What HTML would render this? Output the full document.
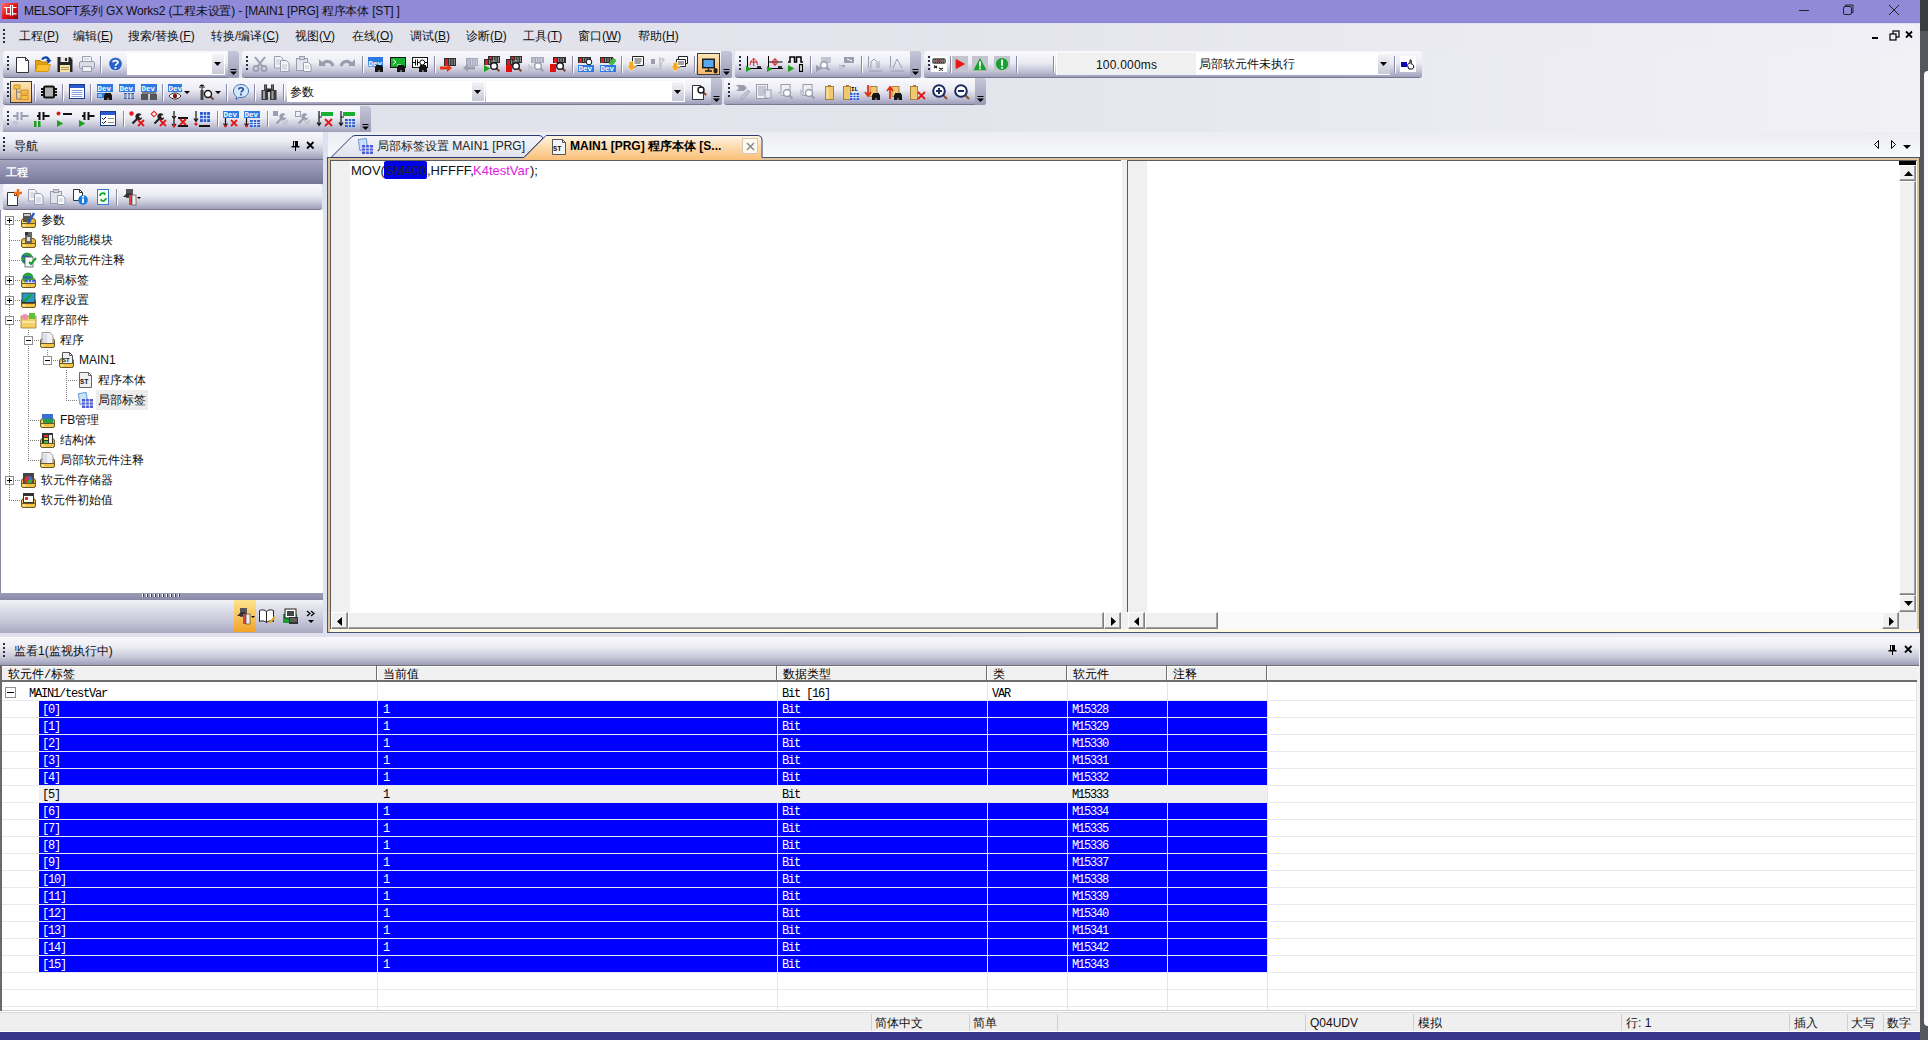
<!DOCTYPE html><html><head><meta charset="utf-8"><style>
*{margin:0;padding:0;box-sizing:border-box}
html,body{width:1928px;height:1040px;overflow:hidden;background:linear-gradient(90deg,#e0e0ea 0%,#e4e4ed 50%,#f1f1f6 100%);font-family:"Liberation Sans",sans-serif;font-size:12px;color:#000}
div{position:absolute}
.t{white-space:nowrap;line-height:14px}
.tb{border-radius:3px;background:linear-gradient(#f9f9fd 0%,#ececf4 45%,#c6c6d8 75%,#9e9ebc 100%);border-bottom:1px solid #78788e}
.ovf{background:linear-gradient(#c6c6d8,#9a9ab6);border-radius:0 3px 3px 0}
.grip{width:2px;background:repeating-linear-gradient(#2c2c44 0 2px,transparent 2px 4px)}
.sep{width:1px;background:#8a8aa4;border-right:1px solid #fff;width:2px}
.combo{background:#fff}
.ddb{background:linear-gradient(#f4f4f8,#c8c8d8)}
svg{position:absolute;overflow:visible}
.hd{background:linear-gradient(#f8f8fc 0%,#ececf4 35%,#c8c8da 72%,#9c9cb8 100%)}
.mono{font-family:Liberation Mono,monospace;font-size:11px}
</style></head><body>
<div style="left:0px;top:0px;width:1920px;height:23px;background:#8f8bd8"></div>
<div style="left:1920px;top:0px;width:8px;height:31px;background:#3b3c40"></div>
<div style="left:1920px;top:31px;width:8px;height:1009px;background:#56575c"></div>
<div style="left:1924px;top:71px;width:8px;height:955px;background:#fbfbfd;border-radius:5px"></div>
<svg style="left:2px;top:3px" width="16" height="16" viewBox="0 0 16 16"><defs><linearGradient id="rg" x1="0" y1="0" x2="1" y2="1"><stop offset="0" stop-color="#ff7070"/><stop offset=".5" stop-color="#e81010"/><stop offset="1" stop-color="#900010"/></linearGradient></defs><rect x="0" y="0" width="16" height="16" fill="url(#rg)"/><path d="M2 4.5h6.5M4.5 4.5v6.3h4M8.5 2v10.5M10.5 2v10.5M10.5 4.5h4M10.5 10.8h4" stroke="#fff" stroke-width="1.2" fill="none"/></svg>
<div class="t" style="left:24px;top:4px;font-size:12px;color:#111;letter-spacing:-0.2px">MELSOFT系列 GX Works2 (工程未设置) - [MAIN1 [PRG] 程序本体 [ST] ]</div>
<svg style="left:1798px;top:4px" width="110" height="14"><path d="M1 6.5h10" stroke="#222" stroke-width="1"/><rect x="45.5" y="2.5" width="8" height="8" rx="1.5" fill="none" stroke="#222"/><path d="M47.5 2.5v-1.5h7.5v7.5h-1.5" fill="none" stroke="#222"/><path d="M91 1l10 10M101 1l-10 10" stroke="#222" stroke-width="1"/></svg>
<div style="left:0px;top:23px;width:1920px;height:28px;background:linear-gradient(90deg,#e0e0ea 0%,#e4e4ed 50%,#f1f0f6 100%)"></div>
<div style="left:0px;top:22px;width:1920px;height:1px;background:#8a87c2"></div>
<div style="left:0px;top:23px;width:1920px;height:1px;background:#e3e1fa"></div>
<div class="grip" style="left:3px;top:29px;width:2px;height:16px;"></div>
<div class="t" style="left:19px;top:29px;color:#111">工程(<u>P</u>)</div>
<div class="t" style="left:73px;top:29px;color:#111">编辑(<u>E</u>)</div>
<div class="t" style="left:128px;top:29px;color:#111">搜索/替换(<u>F</u>)</div>
<div class="t" style="left:211px;top:29px;color:#111">转换/编译(<u>C</u>)</div>
<div class="t" style="left:295px;top:29px;color:#111">视图(<u>V</u>)</div>
<div class="t" style="left:352px;top:29px;color:#111">在线(<u>O</u>)</div>
<div class="t" style="left:410px;top:29px;color:#111">调试(<u>B</u>)</div>
<div class="t" style="left:466px;top:29px;color:#111">诊断(<u>D</u>)</div>
<div class="t" style="left:523px;top:29px;color:#111">工具(<u>T</u>)</div>
<div class="t" style="left:578px;top:29px;color:#111">窗口(<u>W</u>)</div>
<div class="t" style="left:638px;top:29px;color:#111">帮助(<u>H</u>)</div>
<svg style="left:1870px;top:30px" width="46" height="12"><rect x="2" y="7" width="6" height="2" fill="#000"/><rect x="23" y="1" width="6" height="6" fill="none" stroke="#000" stroke-width="1.2"/><rect x="20" y="4" width="6" height="6" fill="#eeeef4" stroke="#000" stroke-width="1.2"/><path d="M36 1.5l6 6M42 1.5l-6 6" stroke="#000" stroke-width="1.8"/></svg>
<div class="tb" style="left:3px;top:51px;width:236px;height:27px;"></div>
<div class="grip" style="left:7px;top:56px;width:2px;height:16px;"></div>
<div class="ovf" style="left:228px;top:51px;width:11px;height:27px;"></div>
<svg style="left:230px;top:68px" width="8" height="8"><path d="M0.5 1.5h6" stroke="#000"/><path d="M0 3.5h7l-3.5 3.5z" fill="#000"/></svg>
<div class="tb" style="left:242px;top:51px;width:490px;height:27px;"></div>
<div class="grip" style="left:246px;top:56px;width:2px;height:16px;"></div>
<div class="ovf" style="left:721px;top:51px;width:11px;height:27px;"></div>
<svg style="left:723px;top:68px" width="8" height="8"><path d="M0.5 1.5h6" stroke="#000"/><path d="M0 3.5h7l-3.5 3.5z" fill="#000"/></svg>
<div class="tb" style="left:735px;top:51px;width:186px;height:27px;"></div>
<div class="grip" style="left:739px;top:56px;width:2px;height:16px;"></div>
<div class="ovf" style="left:910px;top:51px;width:11px;height:27px;"></div>
<svg style="left:912px;top:68px" width="8" height="8"><path d="M0.5 1.5h6" stroke="#000"/><path d="M0 3.5h7l-3.5 3.5z" fill="#000"/></svg>
<div class="tb" style="left:924px;top:51px;width:498px;height:27px;"></div>
<div class="grip" style="left:928px;top:56px;width:2px;height:16px;"></div>
<div class="tb" style="left:3px;top:78px;width:719px;height:27px;"></div>
<div class="grip" style="left:7px;top:83px;width:2px;height:16px;"></div>
<div class="ovf" style="left:711px;top:78px;width:11px;height:27px;"></div>
<svg style="left:713px;top:95px" width="8" height="8"><path d="M0.5 1.5h6" stroke="#000"/><path d="M0 3.5h7l-3.5 3.5z" fill="#000"/></svg>
<div class="tb" style="left:724px;top:78px;width:262px;height:27px;"></div>
<div class="grip" style="left:728px;top:83px;width:2px;height:16px;"></div>
<div class="ovf" style="left:975px;top:78px;width:11px;height:27px;"></div>
<svg style="left:977px;top:95px" width="8" height="8"><path d="M0.5 1.5h6" stroke="#000"/><path d="M0 3.5h7l-3.5 3.5z" fill="#000"/></svg>
<div class="tb" style="left:3px;top:106px;width:368px;height:27px;"></div>
<div class="grip" style="left:7px;top:111px;width:2px;height:16px;"></div>
<div class="ovf" style="left:360px;top:106px;width:11px;height:27px;"></div>
<svg style="left:362px;top:123px" width="8" height="8"><path d="M0.5 1.5h6" stroke="#000"/><path d="M0 3.5h7l-3.5 3.5z" fill="#000"/></svg>
<svg style="left:14px;top:56px" width="16" height="16" viewBox="0 0 16 16"><path d="M2.5 1.5h9l3 3v12h-12z" fill="#fff" stroke="#333"/><path d="M11.5 1.5v3h3" fill="none" stroke="#333"/></svg>
<svg style="left:35px;top:56px" width="16" height="16" viewBox="0 0 16 16"><path d="M0.5 4.5h5l1 1.5h6v9h-12z" fill="#e0a010" stroke="#c08008"/><path d="M2.5 8.5h13l-2.5 7H0.5z" fill="#f8c030" stroke="#d89810"/><path d="M7 3.5c2-3 6-3 7 1" stroke="#1040a8" stroke-width="2.2" fill="none"/><path d="M11 4h5.5l-2.8 3.5z" fill="#1040a8"/></svg>
<svg style="left:57px;top:56px" width="16" height="16" viewBox="0 0 16 16"><rect x="0.5" y="1" width="15" height="15" fill="#262626"/><path d="M13 1l3 3v-3z" fill="#cfcfe0"/><rect x="3.5" y="1" width="8" height="5" fill="#e8e8e8"/><rect x="8" y="2" width="2" height="3" fill="#262626"/><rect x="3" y="9" width="10" height="7" fill="#f6e6a8"/><path d="M4 11.5h8M4 13.5h8" stroke="#b89858"/></svg>
<svg style="left:79px;top:56px" width="16" height="16" viewBox="0 0 16 16"><path d="M3.5 .5h8l1 1.5v4h-9z" fill="#f4f4f8" stroke="#9c9cb0"/><rect x=".5" y="5.5" width="15" height="7" rx="1.5" fill="#dcdce6" stroke="#9c9cb0"/><rect x="3.5" y="10.5" width="9" height="5" fill="#f0f0f4" stroke="#9c9cb0"/><path d="M5 3h5" stroke="#c4c4d2"/></svg>
<svg style="left:108px;top:56px" width="16" height="16" viewBox="0 0 16 16"><circle cx="7.5" cy="8" r="7.3" fill="#dde6f8"/><circle cx="7.5" cy="8" r="6.3" fill="#2a62c8"/><path d="M5 6.2c0-2.2 5-2.2 5 0 0 1.6-2.5 1.8-2.5 3.6" stroke="#fff" stroke-width="1.7" fill="none"/><rect x="6.6" y="11" width="1.8" height="1.8" fill="#fff"/></svg>
<div class="sep" style="left:100px;top:56px;width:2px;height:17px;"></div>
<div style="left:127px;top:53px;width:98px;height:22px;background:#fff"></div>
<div class="ddb" style="left:212px;top:54px;width:12px;height:20px;"></div>
<svg style="left:214px;top:62px" width="8" height="5"><path d="M0 0h7L3.5 4z" fill="#000"/></svg>
<svg style="left:252px;top:56px" width="16" height="16" viewBox="0 0 16 16"><circle cx="4" cy="12.5" r="2.6" fill="none" stroke="#9c9cb0" stroke-width="1.7"/><circle cx="12" cy="12.5" r="2.6" fill="none" stroke="#9c9cb0" stroke-width="1.7"/><path d="M3 1l7.5 9.5M13 1L5.5 10.5" stroke="#9c9cb0" stroke-width="2"/></svg>
<svg style="left:274px;top:56px" width="16" height="16" viewBox="0 0 16 16"><path d="M.5 .5h6l2.5 2.5v9h-8.5z" fill="#f4f4f8" stroke="#9c9cb0"/><path d="M6.5 4.5h6l2.5 2.5v8.5h-8.5z" fill="#f4f4f8" stroke="#9c9cb0"/><path d="M8 9h5M8 11h5M8 13h5M2 4h4M2 6h4M2 8h4" stroke="#c4c4d2"/></svg>
<svg style="left:296px;top:56px" width="16" height="16" viewBox="0 0 16 16"><rect x=".5" y="2.5" width="11" height="12" fill="#e4e4ec" stroke="#9c9cb0"/><rect x="3.5" y=".5" width="5" height="3" fill="#d4d4de" stroke="#9c9cb0"/><path d="M7.5 6.5h5l2.5 2.5v6.5h-7.5z" fill="#fafafc" stroke="#9c9cb0"/><path d="M9 10h4M9 12h4" stroke="#c4c4d2"/></svg>
<svg style="left:318px;top:56px" width="16" height="16" viewBox="0 0 16 16"><path d="M1 3v7h7z" fill="#9c9cb0"/><path d="M4.5 8.5c3-4.5 9-4 10.5 1.5" stroke="#9c9cb0" stroke-width="3.2" fill="none"/></svg>
<svg style="left:340px;top:56px" width="16" height="16" viewBox="0 0 16 16"><path d="M15 3v7H8z" fill="#9c9cb0"/><path d="M11.5 8.5c-3-4.5-9-4-10.5 1.5" stroke="#9c9cb0" stroke-width="3.2" fill="none"/></svg>
<svg style="left:368px;top:56px" width="16" height="16" viewBox="0 0 16 16"><rect x="0" y="1" width="15" height="10" fill="#2a7ae2"/><text x="0.5" y="9.5" font-size="7.5" fill="#fff" font-weight="bold" font-family="Liberation Mono">Dev</text><rect x="0" y="9" width="6" height="2" fill="#fff" opacity=".3"/><path d="M7 10.5h3.5V16H7zM11.5 10.5H15V16h-3.5z" fill="#151515"/><rect x="8" y="9" width="6" height="3" fill="#151515"/><rect x="10" y="12" width="2" height="2" fill="#151515"/></svg>
<svg style="left:390px;top:56px" width="16" height="16" viewBox="0 0 16 16"><rect x=".5" y="1.5" width="15" height="10" fill="#18b030" stroke="#151515"/><path d="M3 3.5l3 2.5-3 2.5M7 9h4" stroke="#fff" fill="none"/><path d="M7 10.5h3.5V16H7zM11.5 10.5H15V16h-3.5z" fill="#151515"/><rect x="8" y="9" width="6" height="3" fill="#151515"/><rect x="10" y="12" width="2" height="2" fill="#151515"/></svg>
<svg style="left:412px;top:56px" width="16" height="16" viewBox="0 0 16 16"><rect x=".5" y="1.5" width="15" height="10" fill="#fff" stroke="#151515"/><path d="M1 6.5h2.5M3.5 3.5v6M5.5 3.5v6M5.5 6.5h2M13 6.5h3" stroke="#000"/><circle cx="10.3" cy="6.5" r="2.5" fill="#fff" stroke="#000"/><path d="M7 10.5h3.5V16H7zM11.5 10.5H15V16h-3.5z" fill="#151515"/><rect x="8" y="9" width="6" height="3" fill="#151515"/><rect x="10" y="12" width="2" height="2" fill="#151515"/></svg>
<svg style="left:440px;top:56px" width="16" height="16" viewBox="0 0 16 16"><rect x="4" y="2" width="12" height="8" fill="#2c2c2c"/><rect x="5" y="3" width="3" height="7" fill="#d42020"/><rect x="9.0" y="3" width="1.2" height="6" fill="#8c8c8c"/><rect x="11.4" y="3" width="1.2" height="6" fill="#8c8c8c"/><rect x="13.8" y="3" width="1.2" height="6" fill="#8c8c8c"/><path d="M0 10.5h7v-2.5l5 4-5 4v-2.5H0z" fill="#e83412"/></svg>
<svg style="left:462px;top:56px" width="16" height="16" viewBox="0 0 16 16"><rect x="4" y="2" width="12" height="8" fill="#a8a8bc"/><rect x="5" y="3" width="3" height="7" fill="#b8b8c8"/><rect x="9.0" y="3" width="1.2" height="6" fill="#d0d0dc"/><rect x="11.4" y="3" width="1.2" height="6" fill="#d0d0dc"/><rect x="13.8" y="3" width="1.2" height="6" fill="#d0d0dc"/><path d="M16 10.5H9v-2.5l-5 4 5 4v-2.5h7z" fill="#9c9cb0" transform="translate(-3,0)"/></svg>
<svg style="left:484px;top:56px" width="16" height="16" viewBox="0 0 16 16"><rect x="4" y="0" width="12" height="7" fill="#2c2c2c"/><rect x="5" y="1" width="3" height="6" fill="#d42020"/><rect x="9.0" y="1" width="1.2" height="5" fill="#8c8c8c"/><rect x="11.4" y="1" width="1.2" height="5" fill="#8c8c8c"/><rect x="13.8" y="1" width="1.2" height="5" fill="#8c8c8c"/><rect x="0" y="3" width="8" height="6" fill="#2c2c2c"/><rect x="1" y="4" width="3" height="5" fill="#d42020"/><rect x="5.0" y="4" width="1.2" height="4" fill="#8c8c8c"/><rect x="7.4" y="4" width="1.2" height="4" fill="#8c8c8c"/><rect x="9.8" y="4" width="1.2" height="4" fill="#8c8c8c"/><path d="M0 9v7l6.3 -3.5z" fill="#20a020"/><path d="M12.309999999999999 12.309999999999999l3 3" stroke="#804020" stroke-width="2"/><circle cx="10" cy="10" r="3.3" fill="#fff" stroke="#151515" stroke-width="1.4"/></svg>
<svg style="left:506px;top:56px" width="16" height="16" viewBox="0 0 16 16"><rect x="4" y="0" width="12" height="7" fill="#2c2c2c"/><rect x="5" y="1" width="3" height="6" fill="#d42020"/><rect x="9.0" y="1" width="1.2" height="5" fill="#8c8c8c"/><rect x="11.4" y="1" width="1.2" height="5" fill="#8c8c8c"/><rect x="13.8" y="1" width="1.2" height="5" fill="#8c8c8c"/><rect x="0" y="3" width="8" height="6" fill="#2c2c2c"/><rect x="1" y="4" width="3" height="5" fill="#d42020"/><rect x="5.0" y="4" width="1.2" height="4" fill="#8c8c8c"/><rect x="7.4" y="4" width="1.2" height="4" fill="#8c8c8c"/><rect x="9.8" y="4" width="1.2" height="4" fill="#8c8c8c"/><rect x="0" y="9" width="6" height="7" fill="#e01010"/><path d="M12.309999999999999 12.309999999999999l3 3" stroke="#804020" stroke-width="2"/><circle cx="10" cy="10" r="3.3" fill="#fff" stroke="#151515" stroke-width="1.4"/></svg>
<svg style="left:528px;top:56px" width="16" height="16" viewBox="0 0 16 16"><rect x="3" y="1" width="13" height="6" fill="#a8a8bc"/><rect x="4" y="2" width="3" height="5" fill="#b8b8c8"/><rect x="8.0" y="2" width="1.2" height="4" fill="#d0d0dc"/><rect x="10.4" y="2" width="1.2" height="4" fill="#d0d0dc"/><rect x="12.8" y="2" width="1.2" height="4" fill="#d0d0dc"/><path d="M0 8v8l6-4z" fill="#c4c4d2"/><path d="M12.309999999999999 12.309999999999999l3 3" stroke="#9c9cb0" stroke-width="2"/><circle cx="10" cy="10" r="3.3" fill="#fff" stroke="#9c9cb0" stroke-width="1.4"/></svg>
<svg style="left:550px;top:56px" width="16" height="16" viewBox="0 0 16 16"><rect x="3" y="1" width="13" height="6" fill="#2c2c2c"/><rect x="4" y="2" width="3" height="5" fill="#d42020"/><rect x="8.0" y="2" width="1.2" height="4" fill="#8c8c8c"/><rect x="10.4" y="2" width="1.2" height="4" fill="#8c8c8c"/><rect x="12.8" y="2" width="1.2" height="4" fill="#8c8c8c"/><rect x="0" y="8" width="6" height="8" fill="#e01010"/><path d="M12.309999999999999 12.309999999999999l3 3" stroke="#804020" stroke-width="2"/><circle cx="10" cy="10" r="3.3" fill="#fff" stroke="#151515" stroke-width="1.4"/></svg>
<svg style="left:578px;top:56px" width="16" height="16" viewBox="0 0 16 16"><rect x="0" y="1" width="13" height="6" fill="#2c2c2c"/><rect x="1" y="2" width="3" height="5" fill="#d42020"/><rect x="5.0" y="2" width="1.2" height="4" fill="#8c8c8c"/><rect x="7.4" y="2" width="1.2" height="4" fill="#8c8c8c"/><rect x="9.8" y="2" width="1.2" height="4" fill="#8c8c8c"/><circle cx="11" cy="6" r="2.8" fill="#fff" stroke="#151515"/><rect x="0" y="9" width="16" height="7" fill="#2a7ae2"/><text x="0.5" y="14.5" font-size="7.5" fill="#fff" font-weight="bold" font-family="Liberation Mono">Dev</text></svg>
<svg style="left:600px;top:56px" width="16" height="16" viewBox="0 0 16 16"><rect x="0" y="1" width="13" height="6" fill="#2c2c2c"/><rect x="1" y="2" width="3" height="5" fill="#d42020"/><rect x="5.0" y="2" width="1.2" height="4" fill="#8c8c8c"/><rect x="7.4" y="2" width="1.2" height="4" fill="#8c8c8c"/><rect x="9.8" y="2" width="1.2" height="4" fill="#8c8c8c"/><path d="M9 7l4-5 3 2.5-4 5z" fill="#40c040" stroke="#208020" stroke-width=".6"/><rect x="0" y="9" width="16" height="7" fill="#2a7ae2"/><text x="0.5" y="14.5" font-size="7.5" fill="#fff" font-weight="bold" font-family="Liberation Mono">Dev</text></svg>
<svg style="left:628px;top:56px" width="16" height="16" viewBox="0 0 16 16"><path d="M4.5 .5h11v9h-6.5l-3 2.5v-2.5h-1.5z" fill="#fff" stroke="#222"/><path d="M6.5 3h7M6.5 5h7M6.5 7h6" stroke="#444"/><path d="M1 5.5h4.5v4h2.5l-4.5 6-4.5-6h2z" fill="#f6a820" stroke="#fff" stroke-width=".5"/></svg>
<svg style="left:650px;top:56px" width="16" height="16" viewBox="0 0 16 16"><rect x="1" y="3" width="4" height="5" fill="#9c9cb0"/><path d="M9 .5l3 3-3 3zM12 1l3 3-3 3z" fill="#c4c4d2"/><rect x="9" y="6" width="3" height="6" fill="#c4c4d2"/><path d="M0 12h9v-2l4 3-4 3v-2H0z" fill="#c4c4d2"/></svg>
<svg style="left:672px;top:56px" width="16" height="16" viewBox="0 0 16 16"><path d="M6.5 .5h9v7h-9z" fill="#fff" stroke="#222"/><path d="M4.5 3.5h9v7h-5l-3 2v-2h-1z" fill="#fff" stroke="#222"/><path d="M6 6h6M6 8h6" stroke="#444"/><path d="M1 6.5h4.5v3.5h2.5l-4.5 6-4.5-6h2z" fill="#f6a820" stroke="#fff" stroke-width=".5"/></svg>
<div class="sep" style="left:362px;top:56px;width:2px;height:17px;"></div>
<div class="sep" style="left:434px;top:56px;width:2px;height:17px;"></div>
<div class="sep" style="left:572px;top:56px;width:2px;height:17px;"></div>
<div class="sep" style="left:621px;top:56px;width:2px;height:17px;"></div>
<div class="sep" style="left:694px;top:56px;width:2px;height:17px;"></div>
<div style="left:697px;top:53px;width:23px;height:22px;background:linear-gradient(#fde4b8,#f8b868);border:1px solid #3c3c3c"></div>
<svg style="left:701px;top:57px" width="16" height="16" viewBox="0 0 16 16"><rect x="1" y="1.5" width="13" height="10" fill="#1e1e1e"/><rect x="2.5" y="3" width="10" height="7" fill="#58a8f0"/><path d="M4 14h7" stroke="#1e1e1e" stroke-width="1.6"/><path d="M7.5 11.5v2" stroke="#1e1e1e" stroke-width="1.6"/><rect x="12.5" y="11" width="4" height="5.5" rx="2" fill="#222"/></svg>
<svg style="left:746px;top:56px" width="16" height="16" viewBox="0 0 16 16"><path d="M1.5 0v13M1 12.5h15" stroke="#000"/><path d="M4 9c1.5-8 6-8 7.5 0" stroke="#d42020" fill="none"/><path d="M7.7 2v8M4 6h7.5" stroke="#d42020"/><path d="M0 10v6l5.4 -3.0z" fill="#20a020"/><rect x="11" y="10" width="4" height="2" fill="#333"/></svg>
<svg style="left:767px;top:56px" width="16" height="16" viewBox="0 0 16 16"><path d="M1.5 0v13M1 12.5h15M1.5 6h14" stroke="#000"/><circle cx="8" cy="6" r="2.5" fill="none" stroke="#d42020"/><path d="M8 2v8" stroke="#d42020"/><path d="M0 10v6l5.4 -3.0z" fill="#20a020"/><rect x="11" y="10" width="4" height="2" fill="#333"/></svg>
<svg style="left:788px;top:56px" width="16" height="16" viewBox="0 0 16 16"><path d="M0 6h2V1h4.5v5h2V1h4.5v5h2" stroke="#000" fill="none" stroke-width="1.5"/><path d="M0 9v7l6.3 -3.5z" fill="#20a020"/><rect x="11" y="8" width="4" height="8" fill="#000"/><rect x="12.2" y="9.2" width="1.6" height="5.6" fill="#fff"/></svg>
<svg style="left:816px;top:56px" width="16" height="16" viewBox="0 0 16 16"><rect x="5" y="1" width="10" height="6" fill="#c4c4d2"/><path d="M0 9v7l6.3 -3.5z" fill="#9c9cb0"/><path d="M10.309999999999999 11.309999999999999l3 3" stroke="#9c9cb0" stroke-width="2"/><circle cx="8" cy="9" r="3.3" fill="#fff" stroke="#9c9cb0" stroke-width="1.4"/></svg>
<svg style="left:839px;top:56px" width="16" height="16" viewBox="0 0 16 16"><rect x="5" y="1" width="10" height="6" fill="#9c9cb0"/><path d="M8 3l5 2" stroke="#fff"/><path d="M0 10h6" stroke="#9c9cb0" stroke-width="2"/><path d="M0 8v7l6.3 -3.5z" fill="#c4c4d2"/></svg>
<svg style="left:867px;top:56px" width="16" height="16" viewBox="0 0 16 16"><path d="M1.5 0v15h14" stroke="#9c9cb0" fill="none"/><path d="M4 12V6l3-3 3 3v6M12 12V5" stroke="#9c9cb0" fill="none"/><path d="M0 10v6l5.4 -3.0z" fill="#c4c4d2"/></svg>
<svg style="left:889px;top:56px" width="16" height="16" viewBox="0 0 16 16"><path d="M1.5 0v15h14" stroke="#9c9cb0" fill="none"/><path d="M4 12l4-9 5 9" stroke="#9c9cb0" fill="none"/><path d="M0 10v6l5.4 -3.0z" fill="#c4c4d2"/></svg>
<div class="sep" style="left:810px;top:56px;width:2px;height:17px;"></div>
<div class="sep" style="left:861px;top:56px;width:2px;height:17px;"></div>
<svg style="left:931px;top:56px" width="16" height="16" viewBox="0 0 16 16"><rect x="0" y="0" width="16" height="16" fill="#fff"/><rect x="1" y="2" width="14" height="6" rx="2.5" fill="#707070"/><path d="M2 3.5h12M2 6.5h12" stroke="#333" stroke-dasharray="1 1"/><path d="M6.5 3.5l3.5 1.5-3.5 1.5z" fill="#d42020"/><path d="M3 9.5l3 2.5M6 10l-3 2M8 12l4 2.5M12 12l-4 2.5" stroke="#222" stroke-width="1.3"/></svg>
<div class="sep" style="left:950px;top:56px;width:2px;height:17px;"></div>
<div style="left:952px;top:56px;width:16px;height:16px;background:#c4c4cc"></div>
<svg style="left:953px;top:57px" width="16" height="16" viewBox="0 0 16 16"><g transform="scale(.875)"><path d="M3 2v12l11-6z" fill="#e81818"/></g></svg>
<div style="left:972px;top:56px;width:16px;height:16px;background:#c4c4cc"></div>
<svg style="left:973px;top:57px" width="16" height="16" viewBox="0 0 16 16"><g transform="scale(.875)"><path d="M8 1L.5 15h15z" fill="#18a030"/><rect x="7" y="5" width="2" height="6" fill="#fff"/><rect x="7" y="12" width="2" height="2" fill="#fff"/></g></svg>
<div style="left:994px;top:56px;width:16px;height:16px;background:#c4c4cc"></div>
<svg style="left:995px;top:57px" width="16" height="16" viewBox="0 0 16 16"><g transform="scale(.875)"><circle cx="8" cy="8" r="7" fill="#18a030"/><rect x="7" y="3" width="2.2" height="7" fill="#fff"/><rect x="7" y="11.3" width="2.2" height="2" fill="#fff"/></g></svg>
<div class="sep" style="left:1016px;top:56px;width:2px;height:17px;"></div>
<div class="sep" style="left:1053px;top:56px;width:2px;height:17px;"></div>
<div style="left:1056px;top:53px;width:140px;height:22px;background:#f0f0f0;border-left:1px solid #fff"></div>
<div class="t" style="left:1096px;top:58px;color:#111;font-size:12px;letter-spacing:0.2px">100.000ms</div>
<div style="left:1196px;top:53px;width:194px;height:22px;background:#fff"></div>
<div class="t" style="left:1199px;top:57px;color:#111">局部软元件未执行</div>
<div class="ddb" style="left:1378px;top:54px;width:12px;height:20px;"></div>
<svg style="left:1380px;top:62px" width="8" height="5"><path d="M0 0h7L3.5 4z" fill="#000"/></svg>
<div class="sep" style="left:1394px;top:56px;width:2px;height:17px;"></div>
<svg style="left:1400px;top:56px" width="16" height="16" viewBox="0 0 16 16"><rect x="0" y="0" width="16" height="16" fill="#fff"/><rect x="1" y="6" width="6" height="5" fill="#0a0ab0"/><path d="M8 11c-1-2 0-4 2-4V4.5c0-1 1.2-1 1.2 0V8c2 0 2.5 1.5 2.5 3s-1 2-2.5 2H9z" fill="#fff" stroke="#000" stroke-width="1"/></svg>
<div style="left:10px;top:81px;width:22px;height:22px;background:linear-gradient(#fde4b8,#f8b868);border:1px solid #3c3c3c"></div>
<svg style="left:13px;top:84px" width="16" height="16" viewBox="0 0 16 16"><rect x="1" y="1" width="6" height="4" fill="#f6c040" stroke="#c08820" stroke-width=".8"/><rect x="8" y="6" width="7" height="4" fill="#f6c040" stroke="#c08820" stroke-width=".8"/><rect x="8" y="11.5" width="7" height="4" fill="#f6c040" stroke="#c08820" stroke-width=".8"/><path d="M3.5 5v10h4.5M3.5 8h4.5" stroke="#808080" fill="none"/></svg>
<svg style="left:41px;top:84px" width="16" height="16" viewBox="0 0 16 16"><rect x="3" y="2.5" width="10" height="11" rx="1.5" fill="#b0b0b0" stroke="#111" stroke-width="2"/><path d="M0 5h3M0 8h3M0 11h3M13 5h3M13 8h3M13 11h3" stroke="#111" stroke-width="1.8"/></svg>
<svg style="left:69px;top:84px" width="16" height="16" viewBox="0 0 16 16"><rect x=".5" y=".5" width="15" height="14" fill="#fff" stroke="#1a3a8a"/><rect x="1" y="1" width="14" height="3" fill="#2a5ad0"/><path d="M2.5 6.5h11M2.5 8.5h11M2.5 10.5h11M2.5 12.5h11" stroke="#6a8ad8" stroke-width=".8"/></svg>
<svg style="left:97px;top:84px" width="16" height="16" viewBox="0 0 16 16"><rect x="0" y="0" width="16" height="8" fill="#2a7ae2"/><text x="0.5" y="6.5" font-size="7.5" fill="#fff" font-weight="bold" font-family="Liberation Mono">Dev</text><rect x="0" y="9" width="8" height="5" fill="#2a7ae2"/><rect x="1" y="10" width="4" height="3" fill="#fff" opacity=".5"/><path d="M7 10.5h3.5V16H7zM11.5 10.5H15V16h-3.5z" fill="#151515"/><rect x="8" y="9" width="6" height="3" fill="#151515"/><rect x="10" y="12" width="2" height="2" fill="#151515"/></svg>
<svg style="left:119px;top:84px" width="16" height="16" viewBox="0 0 16 16"><rect x="0" y="0" width="16" height="8" fill="#2a7ae2"/><text x="0.5" y="6.5" font-size="7.5" fill="#fff" font-weight="bold" font-family="Liberation Mono">Dev</text><rect x="5" y="9" width="10" height="6" fill="#3a5aa0"/><path d="M5 11.0h10" stroke="#fff" stroke-width=".8"/><path d="M5 13.0h10" stroke="#fff" stroke-width=".8"/><path d="M8.333333333333334 9v6" stroke="#fff" stroke-width=".8"/><path d="M11.666666666666668 9v6" stroke="#fff" stroke-width=".8"/></svg>
<svg style="left:141px;top:84px" width="16" height="16" viewBox="0 0 16 16"><rect x="0" y="0" width="16" height="8" fill="#2a7ae2"/><text x="0.5" y="6.5" font-size="7.5" fill="#fff" font-weight="bold" font-family="Liberation Mono">Dev</text><path d="M1 9h14" stroke="#222"/><rect x="0" y="10" width="7" height="6" fill="#555"/><rect x="9" y="10" width="7" height="6" fill="#555"/></svg>
<svg style="left:168px;top:84px" width="16" height="16" viewBox="0 0 16 16"><rect x="0" y="0" width="14" height="8" fill="#2a7ae2"/><text x="0.5" y="6.5" font-size="7.5" fill="#fff" font-weight="bold" font-family="Liberation Mono">Dev</text><path d="M1 12c3-4 9-4 12 0-3 4-9 4-12 0z" fill="#fff" stroke="#333"/><circle cx="7" cy="12" r="2.2" fill="#8a1010"/></svg>
<svg style="left:198px;top:84px" width="16" height="16" viewBox="0 0 16 16"><path d="M4 0v6M1 3h6M2 1.5h4" stroke="#222"/><rect x="2.5" y="6" width="3" height="10" fill="#444"/><path d="M12.45 12.45l3 3" stroke="#804020" stroke-width="2"/><circle cx="10" cy="10" r="3.5" fill="#fff" stroke="#151515" stroke-width="1.4"/></svg>
<svg style="left:233px;top:84px" width="16" height="16" viewBox="0 0 16 16"><path d="M8 .5c4.5 0 7.5 3 7.5 6.5S12.5 13.5 8 13.5c-.8 0-1.5 0-2.2-.2L3 15.5l.5-3C1.5 11.5.5 9 .5 7 .5 3.5 3.5.5 8 .5z" fill="#d4e8fc" stroke="#3a6ab8"/><path d="M5.7 5.4c0-2.2 4.6-2.2 4.6 0 0 1.4-2.3 1.6-2.3 3.2" stroke="#2a4a98" stroke-width="1.6" fill="none"/><rect x="7.1" y="9.6" width="1.8" height="1.8" fill="#2a4a98"/></svg>
<svg style="left:261px;top:84px" width="16" height="16" viewBox="0 0 16 16"><rect x="3" y="0.5" width="3" height="6" fill="#333"/><rect x="10" y="0.5" width="3" height="6" fill="#333"/><rect x="0.5" y="6" width="6.5" height="10" fill="#3a3a3a"/><rect x="9" y="6" width="6.5" height="10" fill="#3a3a3a"/><rect x="2" y="7" width="2" height="8" fill="#a0a0a0"/><rect x="10.5" y="7" width="2" height="8" fill="#a0a0a0"/><rect x="6" y="4.5" width="4" height="3.5" fill="#222"/><rect x="3.8" y="1.5" width="1" height="4" fill="#888"/><rect x="10.8" y="1.5" width="1" height="4" fill="#888"/></svg>
<svg style="left:184px;top:91px" width="40" height="5"><path d="M0 0h6L3 3z M31 0h6l-3 3z" fill="#000"/></svg>
<div class="sep" style="left:34px;top:84px;width:2px;height:17px;"></div>
<div class="sep" style="left:62px;top:84px;width:2px;height:17px;"></div>
<div class="sep" style="left:90px;top:84px;width:2px;height:17px;"></div>
<div class="sep" style="left:162px;top:84px;width:2px;height:17px;"></div>
<div class="sep" style="left:226px;top:84px;width:2px;height:17px;"></div>
<div class="sep" style="left:254px;top:84px;width:2px;height:17px;"></div>
<div class="sep" style="left:283px;top:84px;width:2px;height:17px;"></div>
<div style="left:287px;top:81px;width:198px;height:21px;background:#fff"></div>
<div class="t" style="left:290px;top:85px;color:#111">参数</div>
<div class="ddb" style="left:472px;top:82px;width:12px;height:19px;"></div>
<svg style="left:474px;top:90px" width="8" height="5"><path d="M0 0h7L3.5 4z" fill="#000"/></svg>
<div style="left:486px;top:81px;width:199px;height:21px;background:#fff"></div>
<div class="ddb" style="left:672px;top:82px;width:12px;height:19px;"></div>
<svg style="left:674px;top:90px" width="8" height="5"><path d="M0 0h7L3.5 4z" fill="#000"/></svg>
<svg style="left:691px;top:84px" width="16" height="16" viewBox="0 0 16 16"><path d="M1.5 1.5h8l3 3v11h-11z" fill="#fff" stroke="#333"/><path d="M9.5 1.5v3h3" fill="none" stroke="#333"/><path d="M12.1 8.1l3 3" stroke="#804020" stroke-width="2"/><circle cx="10" cy="6" r="3" fill="#fff" stroke="#151515" stroke-width="1.4"/></svg>
<svg style="left:735px;top:84px" width="16" height="16" viewBox="0 0 16 16"><path d="M1 1h8l3 3-3 3H1l3-3z" fill="#9c9cb0"/><path d="M6 13l7-7 2 2-7 7H6z" fill="#c4c4d2" stroke="#9c9cb0" stroke-width=".7"/></svg>
<svg style="left:756px;top:84px" width="16" height="16" viewBox="0 0 16 16"><rect x=".5" y=".5" width="11" height="14" fill="#f0f0f4" stroke="#9c9cb0"/><path d="M2 3h8M2 5h8M2 7h8M2 9h8M2 11h6" stroke="#9c9cb0"/><rect x="9" y="6" width="6" height="8" fill="#e8e8f0" stroke="#9c9cb0"/></svg>
<svg style="left:778px;top:84px" width="16" height="16" viewBox="0 0 16 16"><rect x="3" y=".5" width="9" height="11" fill="#f0f0f4" stroke="#9c9cb0"/><path d="M0 9l4-4v8z" fill="#c4c4d2"/><path d="M11.45 11.45l3 3" stroke="#9c9cb0" stroke-width="2"/><circle cx="9" cy="9" r="3.5" fill="#fff" stroke="#9c9cb0" stroke-width="1.4"/></svg>
<svg style="left:800px;top:84px" width="16" height="16" viewBox="0 0 16 16"><rect x="3" y=".5" width="9" height="11" fill="#f0f0f4" stroke="#9c9cb0"/><path d="M0 5l4 4-4 4z" fill="#c4c4d2"/><path d="M11.45 11.45l3 3" stroke="#9c9cb0" stroke-width="2"/><circle cx="9" cy="9" r="3.5" fill="#fff" stroke="#9c9cb0" stroke-width="1.4"/></svg>
<svg style="left:825px;top:84px" width="16" height="16" viewBox="0 0 16 16"><rect x="3" y="1" width="3" height="2" fill="#a08040"/><rect x=".5" y="2.5" width="8" height="13" fill="#f0c870" stroke="#a88040"/><rect x="1.5" y="3.5" width="2" height="11" fill="#f8e0a0"/></svg>
<svg style="left:843px;top:84px" width="16" height="16" viewBox="0 0 16 16"><rect x="3" y="1" width="3" height="2" fill="#a08040"/><rect x=".5" y="2.5" width="7" height="13" fill="#f0c870" stroke="#a88040"/><text x="8" y="7" font-size="6" fill="#000" font-weight="bold" font-family="Liberation Mono">IL</text><rect x="7" y="9" width="9" height="7" fill="#2a5ad0"/><path d="M7 11.333333333333334h9" stroke="#fff" stroke-width=".8"/><path d="M7 13.666666666666668h9" stroke="#fff" stroke-width=".8"/><path d="M10.0 9v7" stroke="#fff" stroke-width=".8"/><path d="M13.0 9v7" stroke="#fff" stroke-width=".8"/></svg>
<svg style="left:865px;top:84px" width="16" height="16" viewBox="0 0 16 16"><rect x="5" y="2.5" width="7" height="10" fill="#f0c870" stroke="#a88040"/><path d="M3 1v10M0 8l3 4 3-4" stroke="#e03010" stroke-width="1.8" fill="none"/><path d="M7 10.5h3.5V16H7zM11.5 10.5H15V16h-3.5z" fill="#151515"/><rect x="8" y="9" width="6" height="3" fill="#151515"/><rect x="10" y="12" width="2" height="2" fill="#151515"/></svg>
<svg style="left:887px;top:84px" width="16" height="16" viewBox="0 0 16 16"><rect x="5" y="2.5" width="7" height="10" fill="#f0c870" stroke="#a88040"/><path d="M3 15V4M0 7l3-4 3 4" stroke="#e03010" stroke-width="1.8" fill="none"/><path d="M7 10.5h3.5V16H7zM11.5 10.5H15V16h-3.5z" fill="#151515"/><rect x="8" y="9" width="6" height="3" fill="#151515"/><rect x="10" y="12" width="2" height="2" fill="#151515"/></svg>
<svg style="left:910px;top:84px" width="16" height="16" viewBox="0 0 16 16"><rect x="3" y="1" width="3" height="2" fill="#a08040"/><rect x=".5" y="2.5" width="7" height="13" fill="#f0c870" stroke="#a88040"/><path d="M8 8l7 7M15 8l-7 7" stroke="#e01818" stroke-width="1.8"/></svg>
<svg style="left:932px;top:84px" width="16" height="16" viewBox="0 0 16 16"><path d="M11 11l4 4" stroke="#8a5030" stroke-width="2.2"/><circle cx="7" cy="7" r="5.8" fill="#fff" stroke="#1a2a60" stroke-width="2"/><path d="M4 7h6M7 4v6" stroke="#1a2a60" stroke-width="2"/></svg>
<svg style="left:954px;top:84px" width="16" height="16" viewBox="0 0 16 16"><path d="M11 11l4 4" stroke="#8a5030" stroke-width="2.2"/><circle cx="7" cy="7" r="5.8" fill="#fff" stroke="#1a2a60" stroke-width="2"/><path d="M4 7h6" stroke="#1a2a60" stroke-width="2"/></svg>
<svg style="left:13px;top:111px" width="16" height="16" viewBox="0 0 16 16"><path d="M0 5h5M4.5 1v8M8.5 1v8M8.5 5h7" stroke="#9c9cb0" stroke-width="2"/><rect x="0" y="10" width="5" height="5" fill="#c4c4d2"/></svg>
<svg style="left:34px;top:111px" width="16" height="16" viewBox="0 0 16 16"><path d="M3 5h3M5.5 1v8M9.5 1v8M9.5 5h6" stroke="#111" stroke-width="2"/><rect x="0" y="10" width="2.5" height="6" fill="#20a020"/><rect x="4" y="10" width="2.5" height="6" fill="#20a020"/></svg>
<svg style="left:56px;top:111px" width="16" height="16" viewBox="0 0 16 16"><circle cx="2.5" cy="2.5" r="2" fill="#e01818"/><path d="M7 3h9" stroke="#111" stroke-width="2"/><path d="M1 9v7l6.3 -3.5z" fill="#20a020"/></svg>
<svg style="left:79px;top:111px" width="16" height="16" viewBox="0 0 16 16"><path d="M3 5h3M5.5 1v8M9.5 1v8M9.5 5h6" stroke="#111" stroke-width="2"/><path d="M0 9v7l6.3 -3.5z" fill="#20a020"/></svg>
<svg style="left:100px;top:111px" width="16" height="16" viewBox="0 0 16 16"><rect x=".5" y=".5" width="15" height="14" fill="#fff" stroke="#1a3a8a"/><rect x="1" y="1" width="14" height="3" fill="#2a5ad0"/><path d="M2 7l1.5 1.5L6 6M2 11l1.5 1.5L6 10" stroke="#222" fill="none"/><path d="M8 7.5h6M8 11.5h6" stroke="#888"/></svg>
<svg style="left:129px;top:111px" width="16" height="16" viewBox="0 0 16 16"><circle cx="2.5" cy="2.5" r="2.2" fill="#e01818"/><path d="M3.5 12.5L9 7" stroke="#222" stroke-width="2.2"/><path d="M8 8.5a3.3 3.3 0 1 1 4.5-4.5l-2 .5-.5 1.5 1.5 1 1.8-.8a3.3 3.3 0 0 1-5.3 2.3z" fill="#222"/><path d="M9 9l6 6M15 9l-6 6" stroke="#e01818" stroke-width="1.8"/></svg>
<svg style="left:151px;top:111px" width="16" height="16" viewBox="0 0 16 16"><rect x="1" y="1" width="4" height="4" transform="rotate(45 3 3)" fill="#fff" stroke="#e01818"/><path d="M3.5 12.5L9 7" stroke="#222" stroke-width="2.2"/><path d="M8 8.5a3.3 3.3 0 1 1 4.5-4.5l-2 .5-.5 1.5 1.5 1 1.8-.8a3.3 3.3 0 0 1-5.3 2.3z" fill="#222"/><path d="M9 9l6 6M15 9l-6 6" stroke="#e01818" stroke-width="1.8"/></svg>
<svg style="left:172px;top:111px" width="16" height="16" viewBox="0 0 16 16"><path d="M2 0v7M0 5l2 2.5L4 5M2 8v7M0 13l2 2.5 2-2.5" stroke="#111" stroke-width="1.2" fill="none"/><circle cx="2" cy="15" r="1.4" fill="#e01818"/><path d="M6 7h10M6 15h10" stroke="#111" stroke-width="2"/><path d="M8 8l6 6M14 8l-6 6" stroke="#e01818" stroke-width="1.8"/></svg>
<svg style="left:194px;top:111px" width="16" height="16" viewBox="0 0 16 16"><path d="M2 0v10M0 7.5l2 3 2-3" stroke="#111" stroke-width="1.2" fill="none"/><circle cx="2" cy="13" r="1.6" fill="#e01818"/><path d="M5 15h11" stroke="#111" stroke-width="2"/><rect x="6" y="1" width="10" height="10" fill="#2a5ad0"/><path d="M6 4.333333333333334h10" stroke="#fff" stroke-width=".8"/><path d="M6 7.666666666666667h10" stroke="#fff" stroke-width=".8"/><path d="M9.333333333333334 1v10" stroke="#fff" stroke-width=".8"/><path d="M12.666666666666668 1v10" stroke="#fff" stroke-width=".8"/></svg>
<svg style="left:223px;top:111px" width="16" height="16" viewBox="0 0 16 16"><rect x="0" y="0" width="16" height="7" fill="#2a7ae2"/><text x="0.5" y="5.5" font-size="7.5" fill="#fff" font-weight="bold" font-family="Liberation Mono">Dev</text><path d="M2.5 7v8M.5 12.5l2 3 2-3" stroke="#111" stroke-width="1.2" fill="none"/><circle cx="2.5" cy="15" r="1.3" fill="#e01818"/><path d="M8 9l6 6M14 9l-6 6" stroke="#e01818" stroke-width="1.8"/></svg>
<svg style="left:244px;top:111px" width="16" height="16" viewBox="0 0 16 16"><rect x="0" y="0" width="16" height="7" fill="#2a7ae2"/><text x="0.5" y="5.5" font-size="7.5" fill="#fff" font-weight="bold" font-family="Liberation Mono">Dev</text><path d="M2.5 7v8M.5 12.5l2 3 2-3" stroke="#111" stroke-width="1.2" fill="none"/><circle cx="2.5" cy="15" r="1.3" fill="#e01818"/><rect x="6" y="9" width="10" height="7" fill="#2a5ad0"/><path d="M6 11.333333333333334h10" stroke="#fff" stroke-width=".8"/><path d="M6 13.666666666666668h10" stroke="#fff" stroke-width=".8"/><path d="M9.333333333333334 9v7" stroke="#fff" stroke-width=".8"/><path d="M12.666666666666668 9v7" stroke="#fff" stroke-width=".8"/></svg>
<svg style="left:273px;top:111px" width="16" height="16" viewBox="0 0 16 16"><rect x="0" y="0" width="5" height="5" fill="#9c9cb0"/><path d="M3.5 12.5L9 7" stroke="#9c9cb0" stroke-width="2.2"/><path d="M8 8.5a3.3 3.3 0 1 1 4.5-4.5l-2 .5-.5 1.5 1.5 1 1.8-.8a3.3 3.3 0 0 1-5.3 2.3z" fill="#9c9cb0"/><path d="M9 9l6 6M15 9l-6 6" stroke="#c4c4d2" stroke-width="1.8"/></svg>
<svg style="left:295px;top:111px" width="16" height="16" viewBox="0 0 16 16"><rect x=".5" y=".5" width="5" height="5" fill="none" stroke="#9c9cb0"/><path d="M3.5 12.5L9 7" stroke="#9c9cb0" stroke-width="2.2"/><path d="M8 8.5a3.3 3.3 0 1 1 4.5-4.5l-2 .5-.5 1.5 1.5 1 1.8-.8a3.3 3.3 0 0 1-5.3 2.3z" fill="#9c9cb0"/><path d="M9 9l6 6M15 9l-6 6" stroke="#c4c4d2" stroke-width="1.8"/></svg>
<svg style="left:317px;top:111px" width="16" height="16" viewBox="0 0 16 16"><rect x="4" y="1" width="12" height="4" fill="#18b030"/><path d="M2 0v14M0 11.5l2 3 2-3M2 6h3" stroke="#111" stroke-width="1.2" fill="none"/><path d="M8 8l7 7M15 8l-7 7" stroke="#e01818" stroke-width="1.8"/></svg>
<svg style="left:339px;top:111px" width="16" height="16" viewBox="0 0 16 16"><rect x="4" y="1" width="12" height="4" fill="#18b030"/><path d="M2 0v14M0 11.5l2 3 2-3M2 6h3" stroke="#111" stroke-width="1.2" fill="none"/><rect x="6" y="8" width="10" height="8" fill="#2a5ad0"/><path d="M6 10.666666666666666h10" stroke="#fff" stroke-width=".8"/><path d="M6 13.333333333333332h10" stroke="#fff" stroke-width=".8"/><path d="M9.333333333333334 8v8" stroke="#fff" stroke-width=".8"/><path d="M12.666666666666668 8v8" stroke="#fff" stroke-width=".8"/></svg>
<div class="sep" style="left:123px;top:111px;width:2px;height:16px;"></div>
<div class="sep" style="left:217px;top:111px;width:2px;height:16px;"></div>
<div class="sep" style="left:267px;top:111px;width:2px;height:16px;"></div>
<div class="hd" style="left:0px;top:132px;width:323px;height:27px;"></div>
<div class="grip" style="left:3px;top:137px;width:2px;height:16px;"></div>
<div class="t" style="left:14px;top:139px;color:#111">导航</div>
<div style="left:0px;top:159px;width:323px;height:25px;background:linear-gradient(#a6a6c2,#76769a);border-top:1px solid #6c6c84"></div>
<div class="t" style="left:6px;top:165px;color:#fff;font-weight:bold;font-size:11px">工程</div>
<div class="tb" style="left:3px;top:184px;width:319px;height:26px;"></div>
<div style="left:0px;top:210px;width:323px;height:383px;background:#fff;border-left:1px solid #8a8aa6"></div>
<div style="left:0px;top:593px;width:323px;height:7px;background:linear-gradient(#9c9cb8,#8a8aa8)"></div>
<div style="left:0px;top:600px;width:323px;height:33px;background:linear-gradient(#f2f2f8,#c2c2d6 70%,#a8a8c2)"></div>
<div style="left:327px;top:132px;width:1593px;height:25px;background:linear-gradient(#ececf3,#f9fafc)"></div>
<div style="left:323px;top:132px;width:5px;height:506px;background:#dde2f2"></div>
<div style="left:327px;top:157px;width:1593px;height:476px;background:#4a5468"></div>
<div style="left:328px;top:158px;width:1591px;height:474px;background:#dcc49c"></div>
<div style="left:330px;top:160px;width:1587px;height:470px;background:#5c5c5c"></div>
<div style="left:331px;top:161px;width:790px;height:451px;background:#fff"></div>
<div style="left:331px;top:161px;width:19px;height:451px;background:#f0f0f0"></div>
<div style="left:1121px;top:160px;width:6px;height:472px;background:#f0f0f0;border-left:1px solid #fff"></div>
<div style="left:1127px;top:161px;width:790px;height:451px;background:#fff;border-left:1px solid #5c5c5c"></div>
<div style="left:1128px;top:161px;width:19px;height:451px;background:#f0f0f0"></div>
<div style="left:331px;top:612px;width:1586px;height:18px;background:#f0f0f0"></div>
<div style="left:330px;top:629px;width:1589px;height:3px;background:#fff8e2"></div>
<div style="left:327px;top:633px;width:1593px;height:1px;background:#d8e2fa"></div>
<div class="hd" style="left:0px;top:637px;width:1919px;height:28px;"></div>
<div style="left:0px;top:665px;width:1919px;height:347px;background:#fff"></div>
<div style="left:0px;top:1032px;width:1920px;height:8px;background:#38378c"></div>
<div style="left:9px;top:225px;width:1px;height:275px;background:repeating-linear-gradient(#808080 0 1px,transparent 1px 2px)"></div>
<div style="left:28px;top:330px;width:1px;height:130px;background:repeating-linear-gradient(#808080 0 1px,transparent 1px 2px)"></div>
<div style="left:47px;top:350px;width:1px;height:10px;background:repeating-linear-gradient(#808080 0 1px,transparent 1px 2px)"></div>
<div style="left:66px;top:370px;width:1px;height:30px;background:repeating-linear-gradient(#808080 0 1px,transparent 1px 2px)"></div>
<div style="left:9px;top:220px;width:11px;height:1px;background:repeating-linear-gradient(90deg,#808080 0 1px,transparent 1px 2px)"></div>
<div style="left:5px;top:216px;width:9px;height:9px;background:#fff;border:1px solid #8e8e8e"><div style="left:1px;top:3px;width:5px;height:1px;background:#000"></div><div style="left:3px;top:1px;width:1px;height:5px;background:#000"></div></div>
<div class="t" style="left:41px;top:213px;color:#111">参数</div>
<div style="left:9px;top:240px;width:11px;height:1px;background:repeating-linear-gradient(90deg,#808080 0 1px,transparent 1px 2px)"></div>
<div class="t" style="left:41px;top:233px;color:#111">智能功能模块</div>
<div style="left:9px;top:260px;width:11px;height:1px;background:repeating-linear-gradient(90deg,#808080 0 1px,transparent 1px 2px)"></div>
<div class="t" style="left:41px;top:253px;color:#111">全局软元件注释</div>
<div style="left:9px;top:280px;width:11px;height:1px;background:repeating-linear-gradient(90deg,#808080 0 1px,transparent 1px 2px)"></div>
<div style="left:5px;top:276px;width:9px;height:9px;background:#fff;border:1px solid #8e8e8e"><div style="left:1px;top:3px;width:5px;height:1px;background:#000"></div><div style="left:3px;top:1px;width:1px;height:5px;background:#000"></div></div>
<div class="t" style="left:41px;top:273px;color:#111">全局标签</div>
<div style="left:9px;top:300px;width:11px;height:1px;background:repeating-linear-gradient(90deg,#808080 0 1px,transparent 1px 2px)"></div>
<div style="left:5px;top:296px;width:9px;height:9px;background:#fff;border:1px solid #8e8e8e"><div style="left:1px;top:3px;width:5px;height:1px;background:#000"></div><div style="left:3px;top:1px;width:1px;height:5px;background:#000"></div></div>
<div class="t" style="left:41px;top:293px;color:#111">程序设置</div>
<div style="left:9px;top:320px;width:11px;height:1px;background:repeating-linear-gradient(90deg,#808080 0 1px,transparent 1px 2px)"></div>
<div style="left:5px;top:316px;width:9px;height:9px;background:#fff;border:1px solid #8e8e8e"><div style="left:1px;top:3px;width:5px;height:1px;background:#000"></div></div>
<div class="t" style="left:41px;top:313px;color:#111">程序部件</div>
<div style="left:28px;top:340px;width:11px;height:1px;background:repeating-linear-gradient(90deg,#808080 0 1px,transparent 1px 2px)"></div>
<div style="left:24px;top:336px;width:9px;height:9px;background:#fff;border:1px solid #8e8e8e"><div style="left:1px;top:3px;width:5px;height:1px;background:#000"></div></div>
<div class="t" style="left:60px;top:333px;color:#111">程序</div>
<div style="left:47px;top:360px;width:11px;height:1px;background:repeating-linear-gradient(90deg,#808080 0 1px,transparent 1px 2px)"></div>
<div style="left:43px;top:356px;width:9px;height:9px;background:#fff;border:1px solid #8e8e8e"><div style="left:1px;top:3px;width:5px;height:1px;background:#000"></div></div>
<div class="t" style="left:79px;top:353px;color:#111">MAIN1</div>
<div style="left:66px;top:380px;width:11px;height:1px;background:repeating-linear-gradient(90deg,#808080 0 1px,transparent 1px 2px)"></div>
<div class="t" style="left:98px;top:373px;color:#111">程序本体</div>
<div style="left:66px;top:400px;width:11px;height:1px;background:repeating-linear-gradient(90deg,#808080 0 1px,transparent 1px 2px)"></div>
<div style="left:96px;top:390px;width:52px;height:20px;background:#ececec"></div>
<div class="t" style="left:98px;top:393px;color:#111">局部标签</div>
<div style="left:28px;top:420px;width:11px;height:1px;background:repeating-linear-gradient(90deg,#808080 0 1px,transparent 1px 2px)"></div>
<div class="t" style="left:60px;top:413px;color:#111">FB管理</div>
<div style="left:28px;top:440px;width:11px;height:1px;background:repeating-linear-gradient(90deg,#808080 0 1px,transparent 1px 2px)"></div>
<div class="t" style="left:60px;top:433px;color:#111">结构体</div>
<div style="left:28px;top:460px;width:11px;height:1px;background:repeating-linear-gradient(90deg,#808080 0 1px,transparent 1px 2px)"></div>
<div class="t" style="left:60px;top:453px;color:#111">局部软元件注释</div>
<div style="left:9px;top:480px;width:11px;height:1px;background:repeating-linear-gradient(90deg,#808080 0 1px,transparent 1px 2px)"></div>
<div style="left:5px;top:476px;width:9px;height:9px;background:#fff;border:1px solid #8e8e8e"><div style="left:1px;top:3px;width:5px;height:1px;background:#000"></div><div style="left:3px;top:1px;width:1px;height:5px;background:#000"></div></div>
<div class="t" style="left:41px;top:473px;color:#111">软元件存储器</div>
<div style="left:9px;top:500px;width:11px;height:1px;background:repeating-linear-gradient(90deg,#808080 0 1px,transparent 1px 2px)"></div>
<div class="t" style="left:41px;top:493px;color:#111">软元件初始值</div>
<svg style="left:20px;top:212px" width="16" height="16" viewBox="0 0 16 16"><path d="M1.5 9Q1.5 6.5 4 6.5H13Q15.5 6.5 15.5 9V13.5Q15.5 15.5 13.5 15.5H3.5Q1.5 15.5 1.5 13.5Z" fill="#e8b838" stroke="#6a5828" stroke-width="1"/><path d="M2.5 9.5h3v5h-3z" fill="#fbe48a"/><path d="M3 14.5h11" stroke="#c89020"/><rect x="3" y="1" width="8" height="9" fill="#555"/><rect x="4" y="2" width="6" height="2" fill="#ccc"/><path d="M14 1l-6 11" stroke="#2a5ad0" stroke-width="2.5"/><path d="M1.5 11.5H15.5V13.5Q15.5 15.5 13.5 15.5H3.5Q1.5 15.5 1.5 13.5Z" fill="#f2c446" stroke="#6a5828"/><path d="M2.5 12.5h3v2h-3z" fill="#fbe48a"/></svg>
<svg style="left:20px;top:232px" width="16" height="16" viewBox="0 0 16 16"><path d="M1.5 9Q1.5 6.5 4 6.5H13Q15.5 6.5 15.5 9V13.5Q15.5 15.5 13.5 15.5H3.5Q1.5 15.5 1.5 13.5Z" fill="#e8b838" stroke="#6a5828" stroke-width="1"/><path d="M2.5 9.5h3v5h-3z" fill="#fbe48a"/><path d="M3 14.5h11" stroke="#c89020"/><rect x="5" y="0" width="7" height="12" fill="#666"/><rect x="5" y="0" width="3" height="3" fill="#333"/><rect x="7" y="5" width="3" height="4" fill="#ddd"/><path d="M1.5 11.5H15.5V13.5Q15.5 15.5 13.5 15.5H3.5Q1.5 15.5 1.5 13.5Z" fill="#f2c446" stroke="#6a5828"/><path d="M2.5 12.5h3v2h-3z" fill="#fbe48a"/></svg>
<svg style="left:20px;top:252px" width="16" height="16" viewBox="0 0 16 16"><circle cx="7" cy="6.5" r="6" fill="#30a040"/><path d="M2 4c3 0 5 2 7 0M3 9c2 1 6 1 8-1" stroke="#2060c0" stroke-width="2" fill="none"/><rect x="5" y="5" width="8" height="10" fill="#f8f8f8" stroke="#555" stroke-width=".8"/><path d="M9 10l2 2 5-6" stroke="#18a030" stroke-width="2" fill="none"/></svg>
<svg style="left:20px;top:272px" width="16" height="16" viewBox="0 0 16 16"><path d="M1.5 9Q1.5 6.5 4 6.5H13Q15.5 6.5 15.5 9V13.5Q15.5 15.5 13.5 15.5H3.5Q1.5 15.5 1.5 13.5Z" fill="#e8b838" stroke="#6a5828" stroke-width="1"/><path d="M2.5 9.5h3v5h-3z" fill="#fbe48a"/><path d="M3 14.5h11" stroke="#c89020"/><circle cx="8" cy="6" r="5.5" fill="#30a040"/><path d="M3 5c3 0 5 2 8 0" stroke="#2060c0" stroke-width="2" fill="none"/><rect x="5" y="8" width="10" height="7" fill="#3a5ad0"/><path d="M5 10.333333333333334h10" stroke="#fff" stroke-width=".8"/><path d="M5 12.666666666666668h10" stroke="#fff" stroke-width=".8"/><path d="M8.333333333333334 8v7" stroke="#fff" stroke-width=".8"/><path d="M11.666666666666668 8v7" stroke="#fff" stroke-width=".8"/><path d="M1.5 11.5H15.5V13.5Q15.5 15.5 13.5 15.5H3.5Q1.5 15.5 1.5 13.5Z" fill="#f2c446" stroke="#6a5828"/><path d="M2.5 12.5h3v2h-3z" fill="#fbe48a"/></svg>
<svg style="left:20px;top:292px" width="16" height="16" viewBox="0 0 16 16"><path d="M1.5 9Q1.5 6.5 4 6.5H13Q15.5 6.5 15.5 9V13.5Q15.5 15.5 13.5 15.5H3.5Q1.5 15.5 1.5 13.5Z" fill="#e8b838" stroke="#6a5828" stroke-width="1"/><path d="M2.5 9.5h3v5h-3z" fill="#fbe48a"/><path d="M3 14.5h11" stroke="#c89020"/><rect x="2" y="1" width="13" height="10" fill="#2a9ac0" stroke="#333" stroke-width=".8"/><path d="M3 10l8-7" stroke="#18a030" stroke-width="2"/><rect x="2" y="10" width="13" height="3" fill="#333"/><path d="M1.5 11.5H15.5V13.5Q15.5 15.5 13.5 15.5H3.5Q1.5 15.5 1.5 13.5Z" fill="#f2c446" stroke="#6a5828"/><path d="M2.5 12.5h3v2h-3z" fill="#fbe48a"/></svg>
<svg style="left:20px;top:312px" width="16" height="16" viewBox="0 0 16 16"><path d="M1 4h15v12H1z" fill="#f4d060" stroke="#a08030" stroke-width=".8"/><circle cx="5" cy="5" r="3" fill="#e890b0"/><rect x="9" y="1" width="6" height="6" fill="#60c040"/><path d="M2 10h13" stroke="#fff"/></svg>
<svg style="left:39px;top:332px" width="16" height="16" viewBox="0 0 16 16"><path d="M1.5 9Q1.5 6.5 4 6.5H13Q15.5 6.5 15.5 9V13.5Q15.5 15.5 13.5 15.5H3.5Q1.5 15.5 1.5 13.5Z" fill="#e8b838" stroke="#6a5828" stroke-width="1"/><path d="M2.5 9.5h3v5h-3z" fill="#fbe48a"/><path d="M3 14.5h11" stroke="#c89020"/><path d="M3 .5h8l3 3v9H3z" fill="#f0f0f4" stroke="#888" stroke-width=".8"/><path d="M5 2v10M7 2v10" stroke="#ccd" stroke-width="1"/><path d="M1.5 11.5H15.5V13.5Q15.5 15.5 13.5 15.5H3.5Q1.5 15.5 1.5 13.5Z" fill="#f2c446" stroke="#6a5828"/><path d="M2.5 12.5h3v2h-3z" fill="#fbe48a"/></svg>
<svg style="left:58px;top:352px" width="16" height="16" viewBox="0 0 16 16"><path d="M1.5 9Q1.5 6.5 4 6.5H13Q15.5 6.5 15.5 9V13.5Q15.5 15.5 13.5 15.5H3.5Q1.5 15.5 1.5 13.5Z" fill="#e8b838" stroke="#6a5828" stroke-width="1"/><path d="M2.5 9.5h3v5h-3z" fill="#fbe48a"/><path d="M3 14.5h11" stroke="#c89020"/><path d="M4.5 0.5h7l3 3v9h-10z" fill="#f0f0f4" stroke="#555"/><path d="M11.5 0.5v3h3" fill="none" stroke="#555"/><text x="4.5" y="10" font-size="6" fill="#111" font-weight="bold" font-family="Liberation Mono">ST</text><path d="M1.5 11.5H15.5V13.5Q15.5 15.5 13.5 15.5H3.5Q1.5 15.5 1.5 13.5Z" fill="#f2c446" stroke="#6a5828"/><path d="M2.5 12.5h3v2h-3z" fill="#fbe48a"/></svg>
<svg style="left:77px;top:372px" width="16" height="16" viewBox="0 0 16 16"><path d="M2.5 0.5h9l3 3v12h-12z" fill="#f0f0f4" stroke="#666"/><path d="M11.5 0.5v3h3" fill="none" stroke="#666"/><text x="3" y="11.5" font-size="7" fill="#111" font-weight="bold" font-family="Liberation Mono">ST</text></svg>
<svg style="left:77px;top:392px" width="16" height="16" viewBox="0 0 16 16"><rect x="2" y="1" width="8" height="11" fill="#c8e0f8" stroke="#5a8ad0" stroke-width=".8" transform="rotate(-8 6 6)"/><rect x="5" y="7" width="11" height="9" fill="#4a5ad8"/><path d="M5 10.0h11" stroke="#fff" stroke-width=".8"/><path d="M5 13.0h11" stroke="#fff" stroke-width=".8"/><path d="M8.666666666666666 7v9" stroke="#fff" stroke-width=".8"/><path d="M12.333333333333332 7v9" stroke="#fff" stroke-width=".8"/></svg>
<svg style="left:39px;top:412px" width="16" height="16" viewBox="0 0 16 16"><path d="M1.5 9Q1.5 6.5 4 6.5H13Q15.5 6.5 15.5 9V13.5Q15.5 15.5 13.5 15.5H3.5Q1.5 15.5 1.5 13.5Z" fill="#e8b838" stroke="#6a5828" stroke-width="1"/><path d="M2.5 9.5h3v5h-3z" fill="#fbe48a"/><path d="M3 14.5h11" stroke="#c89020"/><rect x="3" y="2" width="11" height="5" fill="#3a70d0"/><rect x="4" y="7" width="10" height="5" fill="#20a040"/><path d="M1.5 11.5H15.5V13.5Q15.5 15.5 13.5 15.5H3.5Q1.5 15.5 1.5 13.5Z" fill="#f2c446" stroke="#6a5828"/><path d="M2.5 12.5h3v2h-3z" fill="#fbe48a"/></svg>
<svg style="left:39px;top:432px" width="16" height="16" viewBox="0 0 16 16"><path d="M1.5 9Q1.5 6.5 4 6.5H13Q15.5 6.5 15.5 9V13.5Q15.5 15.5 13.5 15.5H3.5Q1.5 15.5 1.5 13.5Z" fill="#e8b838" stroke="#6a5828" stroke-width="1"/><path d="M2.5 9.5h3v5h-3z" fill="#fbe48a"/><path d="M3 14.5h11" stroke="#c89020"/><rect x="3" y="1" width="11" height="13" fill="#333"/><rect x="5" y="3" width="4" height="2" fill="#e03030"/><rect x="5" y="6" width="4" height="2" fill="#f0e040"/><rect x="5" y="9" width="4" height="2" fill="#40c040"/><rect x="10" y="3" width="3" height="8" fill="#f0f0f0"/><path d="M1.5 11.5H15.5V13.5Q15.5 15.5 13.5 15.5H3.5Q1.5 15.5 1.5 13.5Z" fill="#f2c446" stroke="#6a5828"/><path d="M2.5 12.5h3v2h-3z" fill="#fbe48a"/></svg>
<svg style="left:39px;top:452px" width="16" height="16" viewBox="0 0 16 16"><path d="M1.5 9Q1.5 6.5 4 6.5H13Q15.5 6.5 15.5 9V13.5Q15.5 15.5 13.5 15.5H3.5Q1.5 15.5 1.5 13.5Z" fill="#e8b838" stroke="#6a5828" stroke-width="1"/><path d="M2.5 9.5h3v5h-3z" fill="#fbe48a"/><path d="M3 14.5h11" stroke="#c89020"/><path d="M3 .5h8l3 3v9H3z" fill="#f0f0f4" stroke="#888" stroke-width=".8"/><path d="M5 2v10M7 2v10" stroke="#ccd" stroke-width="1"/><path d="M1.5 11.5H15.5V13.5Q15.5 15.5 13.5 15.5H3.5Q1.5 15.5 1.5 13.5Z" fill="#f2c446" stroke="#6a5828"/><path d="M2.5 12.5h3v2h-3z" fill="#fbe48a"/></svg>
<svg style="left:20px;top:472px" width="16" height="16" viewBox="0 0 16 16"><path d="M1.5 9Q1.5 6.5 4 6.5H13Q15.5 6.5 15.5 9V13.5Q15.5 15.5 13.5 15.5H3.5Q1.5 15.5 1.5 13.5Z" fill="#e8b838" stroke="#6a5828" stroke-width="1"/><path d="M2.5 9.5h3v5h-3z" fill="#fbe48a"/><path d="M3 14.5h11" stroke="#c89020"/><rect x="3" y="1" width="11" height="12" fill="#444"/><circle cx="8.5" cy="8" r="4" fill="#e03030"/><path d="M8.5 8V4a4 4 0 0 1 4 4z" fill="#3a70d0"/><path d="M8.5 8h4a4 4 0 0 1-6 3.5z" fill="#30b040"/><path d="M1.5 11.5H15.5V13.5Q15.5 15.5 13.5 15.5H3.5Q1.5 15.5 1.5 13.5Z" fill="#f2c446" stroke="#6a5828"/><path d="M2.5 12.5h3v2h-3z" fill="#fbe48a"/></svg>
<svg style="left:20px;top:492px" width="16" height="16" viewBox="0 0 16 16"><path d="M1.5 9Q1.5 6.5 4 6.5H13Q15.5 6.5 15.5 9V13.5Q15.5 15.5 13.5 15.5H3.5Q1.5 15.5 1.5 13.5Z" fill="#e8b838" stroke="#6a5828" stroke-width="1"/><path d="M2.5 9.5h3v5h-3z" fill="#fbe48a"/><path d="M3 14.5h11" stroke="#c89020"/><rect x="3" y="1" width="11" height="11" fill="#333"/><rect x="4" y="4" width="9" height="6" fill="#fff"/><rect x="5" y="5" width="3" height="3" fill="#e03030"/><path d="M1.5 11.5H15.5V13.5Q15.5 15.5 13.5 15.5H3.5Q1.5 15.5 1.5 13.5Z" fill="#f2c446" stroke="#6a5828"/><path d="M2.5 12.5h3v2h-3z" fill="#fbe48a"/></svg>
<svg style="left:6px;top:189px" width="16" height="16" viewBox="0 0 16 16"><path d="M1.5 3.5h7l3 3v10h-10z" fill="#fff" stroke="#333"/><path d="M8.5 3.5v3h3" fill="none" stroke="#333"/><path d="M12 0v8M8 4h8" stroke="#f07010" stroke-width="2.5"/></svg>
<svg style="left:28px;top:189px" width="16" height="16" viewBox="0 0 16 16"><path d="M.5 .5h6l2.5 2.5v9h-8.5z" fill="#f4f4f8" stroke="#9c9cb0"/><path d="M6.5 4.5h6l2.5 2.5v8.5h-8.5z" fill="#f4f4f8" stroke="#9c9cb0"/><path d="M8 9h5M8 11h5M8 13h5M2 4h4M2 6h4M2 8h4" stroke="#c4c4d2"/></svg>
<svg style="left:50px;top:189px" width="16" height="16" viewBox="0 0 16 16"><rect x=".5" y="2.5" width="11" height="12" fill="#e4e4ec" stroke="#9c9cb0"/><rect x="3.5" y=".5" width="5" height="3" fill="#d4d4de" stroke="#9c9cb0"/><path d="M7.5 6.5h5l2.5 2.5v6.5h-7.5z" fill="#fafafc" stroke="#9c9cb0"/><path d="M9 10h4M9 12h4" stroke="#c4c4d2"/></svg>
<svg style="left:72px;top:189px" width="16" height="16" viewBox="0 0 16 16"><path d="M1.5 0.5h6l3 3v8h-9z" fill="#fff" stroke="#333"/><path d="M7.5 0.5v3h3" fill="none" stroke="#333"/><circle cx="11" cy="11" r="4.8" fill="#1a7ae0"/><rect x="10" y="9.5" width="2" height="4.5" fill="#fff"/><rect x="10" y="7" width="2" height="1.6" fill="#fff"/></svg>
<svg style="left:95px;top:189px" width="16" height="16" viewBox="0 0 16 16"><rect x="2.5" y=".5" width="11" height="15" fill="#f4fff4" stroke="#3a7ad0"/><path d="M5 7a3 3 0 0 1 5-2M11 9a3 3 0 0 1-5 2" stroke="#18a030" stroke-width="1.8" fill="none"/><path d="M9 3.5l2 1.5-2 1.5zM7 12.5l-2-1.5 2-1.5z" fill="#18a030"/></svg>
<svg style="left:123px;top:189px" width="16" height="16" viewBox="0 0 16 16"><rect x="3" y="0" width="7" height="9" fill="#555"/><path d="M0 8l4-4h4v4z" fill="#333"/><rect x="6" y="6" width="3" height="10" fill="#e04040"/><rect x="9" y="6" width="4" height="10" fill="#f0f0f0" stroke="#333" stroke-width=".6"/><path d="M14 8h4l-2 2z" fill="#000"/></svg>
<div class="sep" style="left:116px;top:189px;width:2px;height:16px;"></div>
<svg style="left:320px;top:128px" width="460" height="34" viewBox="320 128 460 34"><defs><linearGradient id="og" x1="0" y1="0" x2="0" y2="1"><stop offset="0" stop-color="#fff6e8"/><stop offset=".45" stop-color="#fddcb0"/><stop offset="1" stop-color="#f9bf78"/></linearGradient><linearGradient id="bg1" x1="0" y1="0" x2="0" y2="1"><stop offset="0" stop-color="#f4f5fa"/><stop offset="1" stop-color="#dfe1ec"/></linearGradient></defs><path d="M331 157.5 L352 136.5 Q353.5 135.5 356 135.5 L539 135.5 Q542 135.5 543 138 L524 157.5 Z" fill="url(#bg1)" stroke="#2a3a70" stroke-width="1"/><path d="M524 160 L524 157.5 L546 135.5 L757 135.5 Q762 135.5 762 140 L762 160 Z" fill="url(#og)"/><path d="M524 157.5 L546 135.5 L757 135.5 Q762 135.5 762 140 L762 157.5" fill="none" stroke="#2a3a70" stroke-width="1"/><path d="M762 157.5 H1920" stroke="#4a5468"/></svg>
<div class="t" style="left:377px;top:139px;color:#222">局部标签设置 MAIN1 [PRG]</div>
<svg style="left:551px;top:139px" width="16" height="16" viewBox="0 0 16 16"><path d="M1.5 0.5h10l3 3v12h-13z" fill="#f4f4f8" stroke="#555"/><path d="M11.5 0.5v3h3" fill="none" stroke="#555"/><text x="2" y="12" font-size="7" fill="#111" font-weight="bold" font-family="Liberation Mono">ST</text></svg>
<svg style="left:357px;top:138px" width="16" height="16" viewBox="0 0 16 16"><rect x="2" y="1" width="8" height="11" fill="#c8e0f8" stroke="#5a8ad0" stroke-width=".8" transform="rotate(-8 6 6)"/><rect x="5" y="7" width="11" height="9" fill="#4a5ad8"/><path d="M5 10.0h11" stroke="#fff" stroke-width=".8"/><path d="M5 13.0h11" stroke="#fff" stroke-width=".8"/><path d="M8.666666666666666 7v9" stroke="#fff" stroke-width=".8"/><path d="M12.333333333333332 7v9" stroke="#fff" stroke-width=".8"/></svg>
<div class="t" style="left:570px;top:139px;color:#000;font-weight:bold">MAIN1 [PRG] 程序本体 [S...</div>
<div style="left:742px;top:138px;width:16px;height:16px;background:#fffaf0;border:1px solid #d8c8b0"><svg style="left:3px;top:3px" width="9" height="9"><path d="M1 1l7 7M8 1l-7 7" stroke="#888" stroke-width="1.5"/></svg></div>
<svg style="left:1870px;top:139px" width="44" height="14"><path d="M8.5 1.5v8l-4-4z" fill="none" stroke="#000"/><path d="M21.5 1.5v8l4-4z" fill="none" stroke="#000"/><path d="M33 6h8l-4 4z" fill="#000"/></svg>
<div class="t" style="left:351px;top:164px;font-size:13px;color:#111">MOV(</div>
<div style="left:384px;top:161px;width:43px;height:18px;background:#0000e8;border-radius:2px"></div>
<div class="t" style="left:385px;top:164px;font-size:13px;color:#222">SM400</div>
<div class="t" style="left:427px;top:164px;font-size:13px;color:#111">,HFFFF,</div>
<div class="t" style="left:473px;top:164px;font-size:13px;color:#e020e0">K4testVar</div>
<div class="t" style="left:530px;top:164px;font-size:13px;color:#111">);</div>
<div style="left:331px;top:612px;width:17px;height:17px;background:#f0f0f0;border-top:1px solid #fff;border-left:1px solid #fff;border-right:1px solid #808080;border-bottom:1px solid #808080;box-shadow:inset -1px -1px 0 #a0a0a0"><svg style="left:5px;top:4px" width="6" height="9"><path d="M5 0v9L0 4.5z" fill="#000"/></svg></div>
<div style="left:348px;top:612px;width:756px;height:17px;background:#f0f0f0;border-top:1px solid #fff;border-left:1px solid #fff;border-right:1px solid #808080;border-bottom:1px solid #808080;box-shadow:inset -1px -1px 0 #a0a0a0"></div>
<div style="left:1104px;top:612px;width:17px;height:17px;background:#f0f0f0;border-top:1px solid #fff;border-left:1px solid #fff;border-right:1px solid #808080;border-bottom:1px solid #808080;box-shadow:inset -1px -1px 0 #a0a0a0"><svg style="left:6px;top:4px" width="6" height="9"><path d="M0 0v9l5-4.5z" fill="#000"/></svg></div>
<div style="left:1128px;top:612px;width:17px;height:17px;background:#f0f0f0;border-top:1px solid #fff;border-left:1px solid #fff;border-right:1px solid #808080;border-bottom:1px solid #808080;box-shadow:inset -1px -1px 0 #a0a0a0"><svg style="left:5px;top:4px" width="6" height="9"><path d="M5 0v9L0 4.5z" fill="#000"/></svg></div>
<div style="left:1145px;top:612px;width:73px;height:17px;background:#f0f0f0;border-top:1px solid #fff;border-left:1px solid #fff;border-right:1px solid #808080;border-bottom:1px solid #808080;box-shadow:inset -1px -1px 0 #a0a0a0"></div>
<div style="left:1218px;top:612px;width:665px;height:17px;background:repeating-conic-gradient(#f4f4f4 0 25%,#fff 0 50%) 0 0/2px 2px"></div>
<div style="left:1882px;top:612px;width:17px;height:17px;background:#f0f0f0;border-top:1px solid #fff;border-left:1px solid #fff;border-right:1px solid #808080;border-bottom:1px solid #808080;box-shadow:inset -1px -1px 0 #a0a0a0"><svg style="left:6px;top:4px" width="6" height="9"><path d="M0 0v9l5-4.5z" fill="#000"/></svg></div>
<div style="left:1899px;top:161px;width:17px;height:4px;background:#000"></div>
<div style="left:1899px;top:165px;width:17px;height:16px;background:#f0f0f0;border-top:1px solid #fff;border-left:1px solid #fff;border-right:1px solid #808080;border-bottom:1px solid #808080;box-shadow:inset -1px -1px 0 #a0a0a0"><svg style="left:4px;top:5px" width="9" height="6"><path d="M0 5h9L4.5 0z" fill="#000"/></svg></div>
<div style="left:1899px;top:181px;width:17px;height:414px;background:#f0f0f0;border-top:1px solid #fff;border-left:1px solid #fff;border-right:1px solid #808080;border-bottom:1px solid #808080;box-shadow:inset -1px -1px 0 #a0a0a0"></div>
<div style="left:1899px;top:595px;width:17px;height:17px;background:#f0f0f0;border-top:1px solid #fff;border-left:1px solid #fff;border-right:1px solid #808080;border-bottom:1px solid #808080;box-shadow:inset -1px -1px 0 #a0a0a0"><svg style="left:4px;top:5px" width="9" height="6"><path d="M0 0h9L4.5 5z" fill="#000"/></svg></div>
<div style="left:1899px;top:612px;width:17px;height:18px;background:#f0f0f0"></div>
<svg style="left:290px;top:140px" width="30" height="12"><path d="M3 1h5v5h1.5v1.5h-3.5v3.5h-1v-3.5h-3.5v-1.5h1.5z" fill="#000"/><path d="M4.5 1.5v4.5" stroke="#e6e6f0"/><path d="M17 2l6.5 6.5M23.5 2l-6.5 6.5" stroke="#000" stroke-width="1.8"/></svg>
<div style="left:142px;top:594px;width:40px;height:3px;background:repeating-linear-gradient(90deg,#fff 0 1px,#3a3a5a 1px 2px,transparent 2px 4px)"></div>
<div style="left:234px;top:600px;width:22px;height:32px;background:linear-gradient(#fce490,#f2a428)"></div>
<svg style="left:237px;top:608px" width="16" height="16" viewBox="0 0 16 16"><rect x="3" y="0" width="7" height="9" fill="#555"/><path d="M0 8l4-4h4v4z" fill="#333"/><rect x="6" y="6" width="3" height="10" fill="#e04040"/><rect x="9" y="6" width="4" height="10" fill="#f0f0f0" stroke="#333" stroke-width=".6"/><path d="M14 8h4l-2 2z" fill="#000"/></svg>
<svg style="left:259px;top:608px" width="16" height="16" viewBox="0 0 16 16"><path d="M.5 2.5c2-1 5-1 7 1 2-2 5-2 7-1v11c-2-1-5-1-7 1-2-2-5-2-7-1z" fill="#fff" stroke="#222"/><path d="M7.5 3.5v11" stroke="#222"/><path d="M10 14l5-6 1.5 1.5-5 6z" fill="#e8b020"/></svg>
<svg style="left:282px;top:608px" width="16" height="16" viewBox="0 0 16 16"><rect x="1" y="6" width="14" height="9" fill="#18a030"/><rect x="3" y="1" width="11" height="9" fill="#fff" stroke="#222"/><rect x="5" y="3" width="7" height="5" fill="#444"/><rect x="7" y="9" width="9" height="7" fill="#333"/><path d="M8 11h7M8 13h7" stroke="#888"/></svg>
<svg style="left:306px;top:610px" width="10" height="14"><path d="M1 1l3 2.5-3 2.5M5 1l3 2.5-3 2.5" fill="none" stroke="#000" stroke-width="1.2"/><path d="M2 10h6l-3 3z" fill="#000"/></svg>
<svg style="left:1886px;top:644px" width="30" height="12"><path d="M4 1h5v5h1.5v1.5h-3.5v3.5h-1v-3.5h-3.5v-1.5h1.5z" fill="#000"/><path d="M5.5 1.5v4.5" stroke="#e6e6f0" stroke-width="1"/><path d="M19 2l6.5 6.5M25.5 2l-6.5 6.5" stroke="#000" stroke-width="1.8"/></svg>
<div class="grip" style="left:3px;top:643px;width:2px;height:16px;"></div>
<div class="t" style="left:14px;top:644px;color:#111">监看1(监视执行中)</div>
<div style="left:0px;top:665px;width:1919px;height:1px;background:#707070"></div>
<div style="left:0px;top:666px;width:2px;height:345px;background:#6a6a6a"></div>
<div style="left:1917px;top:666px;width:2px;height:345px;background:#f4f4f4"></div>
<div style="left:2px;top:666px;width:1915px;height:15px;background:#f0f0f0;border-top:1px solid #fff"></div>
<div style="left:2px;top:680px;width:1915px;height:2px;background:#6e6e6e"></div>
<div class="t" style="left:8px;top:668px;font-family:Liberation Mono,monospace;font-size:12px;color:#000">软元件/标签</div>
<div style="left:376px;top:666px;width:1px;height:14px;background:#707070"></div>
<div style="left:377px;top:667px;width:1px;height:13px;background:#fff"></div>
<div class="t" style="left:383px;top:668px;font-family:Liberation Mono,monospace;font-size:12px;color:#000">当前值</div>
<div style="left:776px;top:666px;width:1px;height:14px;background:#707070"></div>
<div style="left:777px;top:667px;width:1px;height:13px;background:#fff"></div>
<div class="t" style="left:783px;top:668px;font-family:Liberation Mono,monospace;font-size:12px;color:#000">数据类型</div>
<div style="left:986px;top:666px;width:1px;height:14px;background:#707070"></div>
<div style="left:987px;top:667px;width:1px;height:13px;background:#fff"></div>
<div class="t" style="left:993px;top:668px;font-family:Liberation Mono,monospace;font-size:12px;color:#000">类</div>
<div style="left:1066px;top:666px;width:1px;height:14px;background:#707070"></div>
<div style="left:1067px;top:667px;width:1px;height:13px;background:#fff"></div>
<div class="t" style="left:1073px;top:668px;font-family:Liberation Mono,monospace;font-size:12px;color:#000">软元件</div>
<div style="left:1166px;top:666px;width:1px;height:14px;background:#707070"></div>
<div style="left:1167px;top:667px;width:1px;height:13px;background:#fff"></div>
<div class="t" style="left:1173px;top:668px;font-family:Liberation Mono,monospace;font-size:12px;color:#000">注释</div>
<div style="left:1266px;top:666px;width:1px;height:14px;background:#707070"></div>
<div style="left:1267px;top:667px;width:1px;height:13px;background:#fff"></div>
<div style="left:2px;top:700px;width:1915px;height:1px;background:#e8e8ee"></div>
<div style="left:2px;top:717px;width:1915px;height:1px;background:#e8e8ee"></div>
<div style="left:2px;top:734px;width:1915px;height:1px;background:#e8e8ee"></div>
<div style="left:2px;top:751px;width:1915px;height:1px;background:#e8e8ee"></div>
<div style="left:2px;top:768px;width:1915px;height:1px;background:#e8e8ee"></div>
<div style="left:2px;top:785px;width:1915px;height:1px;background:#e8e8ee"></div>
<div style="left:2px;top:802px;width:1915px;height:1px;background:#e8e8ee"></div>
<div style="left:2px;top:819px;width:1915px;height:1px;background:#e8e8ee"></div>
<div style="left:2px;top:836px;width:1915px;height:1px;background:#e8e8ee"></div>
<div style="left:2px;top:853px;width:1915px;height:1px;background:#e8e8ee"></div>
<div style="left:2px;top:870px;width:1915px;height:1px;background:#e8e8ee"></div>
<div style="left:2px;top:887px;width:1915px;height:1px;background:#e8e8ee"></div>
<div style="left:2px;top:904px;width:1915px;height:1px;background:#e8e8ee"></div>
<div style="left:2px;top:921px;width:1915px;height:1px;background:#e8e8ee"></div>
<div style="left:2px;top:938px;width:1915px;height:1px;background:#e8e8ee"></div>
<div style="left:2px;top:955px;width:1915px;height:1px;background:#e8e8ee"></div>
<div style="left:2px;top:972px;width:1915px;height:1px;background:#e8e8ee"></div>
<div style="left:2px;top:989px;width:1915px;height:1px;background:#e8e8ee"></div>
<div style="left:2px;top:1006px;width:1915px;height:1px;background:#e8e8ee"></div>
<div style="left:377px;top:682px;width:1px;height:329px;background:#e4e4ec"></div>
<div style="left:777px;top:682px;width:1px;height:329px;background:#e4e4ec"></div>
<div style="left:987px;top:682px;width:1px;height:329px;background:#e4e4ec"></div>
<div style="left:1067px;top:682px;width:1px;height:329px;background:#e4e4ec"></div>
<div style="left:1167px;top:682px;width:1px;height:329px;background:#e4e4ec"></div>
<div style="left:1267px;top:682px;width:1px;height:329px;background:#e4e4ec"></div>
<div style="left:1916px;top:682px;width:1px;height:329px;background:#e4e4ec"></div>
<div style="left:5px;top:687px;width:11px;height:11px;background:#fff;border:1px solid #8e8e8e"><div style="left:1px;top:4px;width:7px;height:1px;background:#000"></div></div>
<div class="t" style="left:29px;top:688px;font-family:Liberation Mono,monospace;font-size:12px;letter-spacing:-1.2px;line-height:12px;color:#000">MAIN1/testVar</div>
<div class="t" style="left:782px;top:688px;font-family:Liberation Mono,monospace;font-size:12px;letter-spacing:-1.2px;line-height:12px;color:#000">Bit [16]</div>
<div class="t" style="left:992px;top:688px;font-family:Liberation Mono,monospace;font-size:12px;letter-spacing:-1.2px;line-height:12px;color:#000">VAR</div>
<div style="left:39px;top:701px;width:338px;height:16px;background:#0000ff"></div>
<div style="left:378px;top:701px;width:399px;height:16px;background:#0000ff"></div>
<div style="left:778px;top:701px;width:209px;height:16px;background:#0000ff"></div>
<div style="left:988px;top:701px;width:79px;height:16px;background:#0000ff"></div>
<div style="left:1068px;top:701px;width:99px;height:16px;background:#0000ff"></div>
<div style="left:1168px;top:701px;width:99px;height:16px;background:#0000ff"></div>
<div class="t" style="left:42px;top:704px;font-family:Liberation Mono,monospace;font-size:12px;letter-spacing:-1.2px;line-height:12px;color:#fff">[0]</div>
<div class="t" style="left:383px;top:704px;font-family:Liberation Mono,monospace;font-size:12px;letter-spacing:-1.2px;line-height:12px;color:#fff">1</div>
<div class="t" style="left:782px;top:704px;font-family:Liberation Mono,monospace;font-size:12px;letter-spacing:-1.2px;line-height:12px;color:#fff">Bit</div>
<div class="t" style="left:1072px;top:704px;font-family:Liberation Mono,monospace;font-size:12px;letter-spacing:-1.2px;line-height:12px;color:#fff">M15328</div>
<div style="left:39px;top:718px;width:338px;height:16px;background:#0000ff"></div>
<div style="left:378px;top:718px;width:399px;height:16px;background:#0000ff"></div>
<div style="left:778px;top:718px;width:209px;height:16px;background:#0000ff"></div>
<div style="left:988px;top:718px;width:79px;height:16px;background:#0000ff"></div>
<div style="left:1068px;top:718px;width:99px;height:16px;background:#0000ff"></div>
<div style="left:1168px;top:718px;width:99px;height:16px;background:#0000ff"></div>
<div class="t" style="left:42px;top:721px;font-family:Liberation Mono,monospace;font-size:12px;letter-spacing:-1.2px;line-height:12px;color:#fff">[1]</div>
<div class="t" style="left:383px;top:721px;font-family:Liberation Mono,monospace;font-size:12px;letter-spacing:-1.2px;line-height:12px;color:#fff">1</div>
<div class="t" style="left:782px;top:721px;font-family:Liberation Mono,monospace;font-size:12px;letter-spacing:-1.2px;line-height:12px;color:#fff">Bit</div>
<div class="t" style="left:1072px;top:721px;font-family:Liberation Mono,monospace;font-size:12px;letter-spacing:-1.2px;line-height:12px;color:#fff">M15329</div>
<div style="left:39px;top:735px;width:338px;height:16px;background:#0000ff"></div>
<div style="left:378px;top:735px;width:399px;height:16px;background:#0000ff"></div>
<div style="left:778px;top:735px;width:209px;height:16px;background:#0000ff"></div>
<div style="left:988px;top:735px;width:79px;height:16px;background:#0000ff"></div>
<div style="left:1068px;top:735px;width:99px;height:16px;background:#0000ff"></div>
<div style="left:1168px;top:735px;width:99px;height:16px;background:#0000ff"></div>
<div class="t" style="left:42px;top:738px;font-family:Liberation Mono,monospace;font-size:12px;letter-spacing:-1.2px;line-height:12px;color:#fff">[2]</div>
<div class="t" style="left:383px;top:738px;font-family:Liberation Mono,monospace;font-size:12px;letter-spacing:-1.2px;line-height:12px;color:#fff">1</div>
<div class="t" style="left:782px;top:738px;font-family:Liberation Mono,monospace;font-size:12px;letter-spacing:-1.2px;line-height:12px;color:#fff">Bit</div>
<div class="t" style="left:1072px;top:738px;font-family:Liberation Mono,monospace;font-size:12px;letter-spacing:-1.2px;line-height:12px;color:#fff">M15330</div>
<div style="left:39px;top:752px;width:338px;height:16px;background:#0000ff"></div>
<div style="left:378px;top:752px;width:399px;height:16px;background:#0000ff"></div>
<div style="left:778px;top:752px;width:209px;height:16px;background:#0000ff"></div>
<div style="left:988px;top:752px;width:79px;height:16px;background:#0000ff"></div>
<div style="left:1068px;top:752px;width:99px;height:16px;background:#0000ff"></div>
<div style="left:1168px;top:752px;width:99px;height:16px;background:#0000ff"></div>
<div class="t" style="left:42px;top:755px;font-family:Liberation Mono,monospace;font-size:12px;letter-spacing:-1.2px;line-height:12px;color:#fff">[3]</div>
<div class="t" style="left:383px;top:755px;font-family:Liberation Mono,monospace;font-size:12px;letter-spacing:-1.2px;line-height:12px;color:#fff">1</div>
<div class="t" style="left:782px;top:755px;font-family:Liberation Mono,monospace;font-size:12px;letter-spacing:-1.2px;line-height:12px;color:#fff">Bit</div>
<div class="t" style="left:1072px;top:755px;font-family:Liberation Mono,monospace;font-size:12px;letter-spacing:-1.2px;line-height:12px;color:#fff">M15331</div>
<div style="left:39px;top:769px;width:338px;height:16px;background:#0000ff"></div>
<div style="left:378px;top:769px;width:399px;height:16px;background:#0000ff"></div>
<div style="left:778px;top:769px;width:209px;height:16px;background:#0000ff"></div>
<div style="left:988px;top:769px;width:79px;height:16px;background:#0000ff"></div>
<div style="left:1068px;top:769px;width:99px;height:16px;background:#0000ff"></div>
<div style="left:1168px;top:769px;width:99px;height:16px;background:#0000ff"></div>
<div class="t" style="left:42px;top:772px;font-family:Liberation Mono,monospace;font-size:12px;letter-spacing:-1.2px;line-height:12px;color:#fff">[4]</div>
<div class="t" style="left:383px;top:772px;font-family:Liberation Mono,monospace;font-size:12px;letter-spacing:-1.2px;line-height:12px;color:#fff">1</div>
<div class="t" style="left:782px;top:772px;font-family:Liberation Mono,monospace;font-size:12px;letter-spacing:-1.2px;line-height:12px;color:#fff">Bit</div>
<div class="t" style="left:1072px;top:772px;font-family:Liberation Mono,monospace;font-size:12px;letter-spacing:-1.2px;line-height:12px;color:#fff">M15332</div>
<div style="left:39px;top:786px;width:1228px;height:16px;background:#efefef"></div>
<div class="t" style="left:42px;top:789px;font-family:Liberation Mono,monospace;font-size:12px;letter-spacing:-1.2px;line-height:12px;color:#000">[5]</div>
<div class="t" style="left:383px;top:789px;font-family:Liberation Mono,monospace;font-size:12px;letter-spacing:-1.2px;line-height:12px;color:#000">1</div>
<div class="t" style="left:782px;top:789px;font-family:Liberation Mono,monospace;font-size:12px;letter-spacing:-1.2px;line-height:12px;color:#000">Bit</div>
<div class="t" style="left:1072px;top:789px;font-family:Liberation Mono,monospace;font-size:12px;letter-spacing:-1.2px;line-height:12px;color:#000">M15333</div>
<div style="left:39px;top:803px;width:338px;height:16px;background:#0000ff"></div>
<div style="left:378px;top:803px;width:399px;height:16px;background:#0000ff"></div>
<div style="left:778px;top:803px;width:209px;height:16px;background:#0000ff"></div>
<div style="left:988px;top:803px;width:79px;height:16px;background:#0000ff"></div>
<div style="left:1068px;top:803px;width:99px;height:16px;background:#0000ff"></div>
<div style="left:1168px;top:803px;width:99px;height:16px;background:#0000ff"></div>
<div class="t" style="left:42px;top:806px;font-family:Liberation Mono,monospace;font-size:12px;letter-spacing:-1.2px;line-height:12px;color:#fff">[6]</div>
<div class="t" style="left:383px;top:806px;font-family:Liberation Mono,monospace;font-size:12px;letter-spacing:-1.2px;line-height:12px;color:#fff">1</div>
<div class="t" style="left:782px;top:806px;font-family:Liberation Mono,monospace;font-size:12px;letter-spacing:-1.2px;line-height:12px;color:#fff">Bit</div>
<div class="t" style="left:1072px;top:806px;font-family:Liberation Mono,monospace;font-size:12px;letter-spacing:-1.2px;line-height:12px;color:#fff">M15334</div>
<div style="left:39px;top:820px;width:338px;height:16px;background:#0000ff"></div>
<div style="left:378px;top:820px;width:399px;height:16px;background:#0000ff"></div>
<div style="left:778px;top:820px;width:209px;height:16px;background:#0000ff"></div>
<div style="left:988px;top:820px;width:79px;height:16px;background:#0000ff"></div>
<div style="left:1068px;top:820px;width:99px;height:16px;background:#0000ff"></div>
<div style="left:1168px;top:820px;width:99px;height:16px;background:#0000ff"></div>
<div class="t" style="left:42px;top:823px;font-family:Liberation Mono,monospace;font-size:12px;letter-spacing:-1.2px;line-height:12px;color:#fff">[7]</div>
<div class="t" style="left:383px;top:823px;font-family:Liberation Mono,monospace;font-size:12px;letter-spacing:-1.2px;line-height:12px;color:#fff">1</div>
<div class="t" style="left:782px;top:823px;font-family:Liberation Mono,monospace;font-size:12px;letter-spacing:-1.2px;line-height:12px;color:#fff">Bit</div>
<div class="t" style="left:1072px;top:823px;font-family:Liberation Mono,monospace;font-size:12px;letter-spacing:-1.2px;line-height:12px;color:#fff">M15335</div>
<div style="left:39px;top:837px;width:338px;height:16px;background:#0000ff"></div>
<div style="left:378px;top:837px;width:399px;height:16px;background:#0000ff"></div>
<div style="left:778px;top:837px;width:209px;height:16px;background:#0000ff"></div>
<div style="left:988px;top:837px;width:79px;height:16px;background:#0000ff"></div>
<div style="left:1068px;top:837px;width:99px;height:16px;background:#0000ff"></div>
<div style="left:1168px;top:837px;width:99px;height:16px;background:#0000ff"></div>
<div class="t" style="left:42px;top:840px;font-family:Liberation Mono,monospace;font-size:12px;letter-spacing:-1.2px;line-height:12px;color:#fff">[8]</div>
<div class="t" style="left:383px;top:840px;font-family:Liberation Mono,monospace;font-size:12px;letter-spacing:-1.2px;line-height:12px;color:#fff">1</div>
<div class="t" style="left:782px;top:840px;font-family:Liberation Mono,monospace;font-size:12px;letter-spacing:-1.2px;line-height:12px;color:#fff">Bit</div>
<div class="t" style="left:1072px;top:840px;font-family:Liberation Mono,monospace;font-size:12px;letter-spacing:-1.2px;line-height:12px;color:#fff">M15336</div>
<div style="left:39px;top:854px;width:338px;height:16px;background:#0000ff"></div>
<div style="left:378px;top:854px;width:399px;height:16px;background:#0000ff"></div>
<div style="left:778px;top:854px;width:209px;height:16px;background:#0000ff"></div>
<div style="left:988px;top:854px;width:79px;height:16px;background:#0000ff"></div>
<div style="left:1068px;top:854px;width:99px;height:16px;background:#0000ff"></div>
<div style="left:1168px;top:854px;width:99px;height:16px;background:#0000ff"></div>
<div class="t" style="left:42px;top:857px;font-family:Liberation Mono,monospace;font-size:12px;letter-spacing:-1.2px;line-height:12px;color:#fff">[9]</div>
<div class="t" style="left:383px;top:857px;font-family:Liberation Mono,monospace;font-size:12px;letter-spacing:-1.2px;line-height:12px;color:#fff">1</div>
<div class="t" style="left:782px;top:857px;font-family:Liberation Mono,monospace;font-size:12px;letter-spacing:-1.2px;line-height:12px;color:#fff">Bit</div>
<div class="t" style="left:1072px;top:857px;font-family:Liberation Mono,monospace;font-size:12px;letter-spacing:-1.2px;line-height:12px;color:#fff">M15337</div>
<div style="left:39px;top:871px;width:338px;height:16px;background:#0000ff"></div>
<div style="left:378px;top:871px;width:399px;height:16px;background:#0000ff"></div>
<div style="left:778px;top:871px;width:209px;height:16px;background:#0000ff"></div>
<div style="left:988px;top:871px;width:79px;height:16px;background:#0000ff"></div>
<div style="left:1068px;top:871px;width:99px;height:16px;background:#0000ff"></div>
<div style="left:1168px;top:871px;width:99px;height:16px;background:#0000ff"></div>
<div class="t" style="left:42px;top:874px;font-family:Liberation Mono,monospace;font-size:12px;letter-spacing:-1.2px;line-height:12px;color:#fff">[10]</div>
<div class="t" style="left:383px;top:874px;font-family:Liberation Mono,monospace;font-size:12px;letter-spacing:-1.2px;line-height:12px;color:#fff">1</div>
<div class="t" style="left:782px;top:874px;font-family:Liberation Mono,monospace;font-size:12px;letter-spacing:-1.2px;line-height:12px;color:#fff">Bit</div>
<div class="t" style="left:1072px;top:874px;font-family:Liberation Mono,monospace;font-size:12px;letter-spacing:-1.2px;line-height:12px;color:#fff">M15338</div>
<div style="left:39px;top:888px;width:338px;height:16px;background:#0000ff"></div>
<div style="left:378px;top:888px;width:399px;height:16px;background:#0000ff"></div>
<div style="left:778px;top:888px;width:209px;height:16px;background:#0000ff"></div>
<div style="left:988px;top:888px;width:79px;height:16px;background:#0000ff"></div>
<div style="left:1068px;top:888px;width:99px;height:16px;background:#0000ff"></div>
<div style="left:1168px;top:888px;width:99px;height:16px;background:#0000ff"></div>
<div class="t" style="left:42px;top:891px;font-family:Liberation Mono,monospace;font-size:12px;letter-spacing:-1.2px;line-height:12px;color:#fff">[11]</div>
<div class="t" style="left:383px;top:891px;font-family:Liberation Mono,monospace;font-size:12px;letter-spacing:-1.2px;line-height:12px;color:#fff">1</div>
<div class="t" style="left:782px;top:891px;font-family:Liberation Mono,monospace;font-size:12px;letter-spacing:-1.2px;line-height:12px;color:#fff">Bit</div>
<div class="t" style="left:1072px;top:891px;font-family:Liberation Mono,monospace;font-size:12px;letter-spacing:-1.2px;line-height:12px;color:#fff">M15339</div>
<div style="left:39px;top:905px;width:338px;height:16px;background:#0000ff"></div>
<div style="left:378px;top:905px;width:399px;height:16px;background:#0000ff"></div>
<div style="left:778px;top:905px;width:209px;height:16px;background:#0000ff"></div>
<div style="left:988px;top:905px;width:79px;height:16px;background:#0000ff"></div>
<div style="left:1068px;top:905px;width:99px;height:16px;background:#0000ff"></div>
<div style="left:1168px;top:905px;width:99px;height:16px;background:#0000ff"></div>
<div class="t" style="left:42px;top:908px;font-family:Liberation Mono,monospace;font-size:12px;letter-spacing:-1.2px;line-height:12px;color:#fff">[12]</div>
<div class="t" style="left:383px;top:908px;font-family:Liberation Mono,monospace;font-size:12px;letter-spacing:-1.2px;line-height:12px;color:#fff">1</div>
<div class="t" style="left:782px;top:908px;font-family:Liberation Mono,monospace;font-size:12px;letter-spacing:-1.2px;line-height:12px;color:#fff">Bit</div>
<div class="t" style="left:1072px;top:908px;font-family:Liberation Mono,monospace;font-size:12px;letter-spacing:-1.2px;line-height:12px;color:#fff">M15340</div>
<div style="left:39px;top:922px;width:338px;height:16px;background:#0000ff"></div>
<div style="left:378px;top:922px;width:399px;height:16px;background:#0000ff"></div>
<div style="left:778px;top:922px;width:209px;height:16px;background:#0000ff"></div>
<div style="left:988px;top:922px;width:79px;height:16px;background:#0000ff"></div>
<div style="left:1068px;top:922px;width:99px;height:16px;background:#0000ff"></div>
<div style="left:1168px;top:922px;width:99px;height:16px;background:#0000ff"></div>
<div class="t" style="left:42px;top:925px;font-family:Liberation Mono,monospace;font-size:12px;letter-spacing:-1.2px;line-height:12px;color:#fff">[13]</div>
<div class="t" style="left:383px;top:925px;font-family:Liberation Mono,monospace;font-size:12px;letter-spacing:-1.2px;line-height:12px;color:#fff">1</div>
<div class="t" style="left:782px;top:925px;font-family:Liberation Mono,monospace;font-size:12px;letter-spacing:-1.2px;line-height:12px;color:#fff">Bit</div>
<div class="t" style="left:1072px;top:925px;font-family:Liberation Mono,monospace;font-size:12px;letter-spacing:-1.2px;line-height:12px;color:#fff">M15341</div>
<div style="left:39px;top:939px;width:338px;height:16px;background:#0000ff"></div>
<div style="left:378px;top:939px;width:399px;height:16px;background:#0000ff"></div>
<div style="left:778px;top:939px;width:209px;height:16px;background:#0000ff"></div>
<div style="left:988px;top:939px;width:79px;height:16px;background:#0000ff"></div>
<div style="left:1068px;top:939px;width:99px;height:16px;background:#0000ff"></div>
<div style="left:1168px;top:939px;width:99px;height:16px;background:#0000ff"></div>
<div class="t" style="left:42px;top:942px;font-family:Liberation Mono,monospace;font-size:12px;letter-spacing:-1.2px;line-height:12px;color:#fff">[14]</div>
<div class="t" style="left:383px;top:942px;font-family:Liberation Mono,monospace;font-size:12px;letter-spacing:-1.2px;line-height:12px;color:#fff">1</div>
<div class="t" style="left:782px;top:942px;font-family:Liberation Mono,monospace;font-size:12px;letter-spacing:-1.2px;line-height:12px;color:#fff">Bit</div>
<div class="t" style="left:1072px;top:942px;font-family:Liberation Mono,monospace;font-size:12px;letter-spacing:-1.2px;line-height:12px;color:#fff">M15342</div>
<div style="left:39px;top:956px;width:338px;height:16px;background:#0000ff"></div>
<div style="left:378px;top:956px;width:399px;height:16px;background:#0000ff"></div>
<div style="left:778px;top:956px;width:209px;height:16px;background:#0000ff"></div>
<div style="left:988px;top:956px;width:79px;height:16px;background:#0000ff"></div>
<div style="left:1068px;top:956px;width:99px;height:16px;background:#0000ff"></div>
<div style="left:1168px;top:956px;width:99px;height:16px;background:#0000ff"></div>
<div class="t" style="left:42px;top:959px;font-family:Liberation Mono,monospace;font-size:12px;letter-spacing:-1.2px;line-height:12px;color:#fff">[15]</div>
<div class="t" style="left:383px;top:959px;font-family:Liberation Mono,monospace;font-size:12px;letter-spacing:-1.2px;line-height:12px;color:#fff">1</div>
<div class="t" style="left:782px;top:959px;font-family:Liberation Mono,monospace;font-size:12px;letter-spacing:-1.2px;line-height:12px;color:#fff">Bit</div>
<div class="t" style="left:1072px;top:959px;font-family:Liberation Mono,monospace;font-size:12px;letter-spacing:-1.2px;line-height:12px;color:#fff">M15343</div>
<div style="left:2px;top:1010px;width:1915px;height:1px;background:#d0d0d0"></div>
<div style="left:0px;top:1011px;width:1920px;height:21px;background:#efefef;border-top:1px solid #fff;border-bottom:1px solid #fff"></div>
<div style="left:0px;top:1012px;width:1920px;height:1px;background:#d8d8d8"></div>
<div style="left:871px;top:1014px;width:1px;height:17px;background:#d0d0d0"></div>
<div style="left:969px;top:1014px;width:1px;height:17px;background:#d0d0d0"></div>
<div style="left:1057px;top:1014px;width:1px;height:17px;background:#d0d0d0"></div>
<div style="left:1305px;top:1014px;width:1px;height:17px;background:#d0d0d0"></div>
<div style="left:1413px;top:1014px;width:1px;height:17px;background:#d0d0d0"></div>
<div style="left:1621px;top:1014px;width:1px;height:17px;background:#d0d0d0"></div>
<div style="left:1789px;top:1014px;width:1px;height:17px;background:#d0d0d0"></div>
<div style="left:1847px;top:1014px;width:1px;height:17px;background:#d0d0d0"></div>
<div style="left:1883px;top:1014px;width:1px;height:17px;background:#d0d0d0"></div>
<div class="t" style="left:875px;top:1016px;color:#111">简体中文</div>
<div class="t" style="left:973px;top:1016px;color:#111">简单</div>
<div class="t" style="left:1310px;top:1016px;color:#111">Q04UDV</div>
<div class="t" style="left:1418px;top:1016px;color:#111">模拟</div>
<div class="t" style="left:1626px;top:1016px;color:#111">行: 1</div>
<div class="t" style="left:1794px;top:1016px;color:#111">插入</div>
<div class="t" style="left:1851px;top:1016px;color:#111">大写</div>
<div class="t" style="left:1887px;top:1016px;color:#111">数字</div>
</body></html>
